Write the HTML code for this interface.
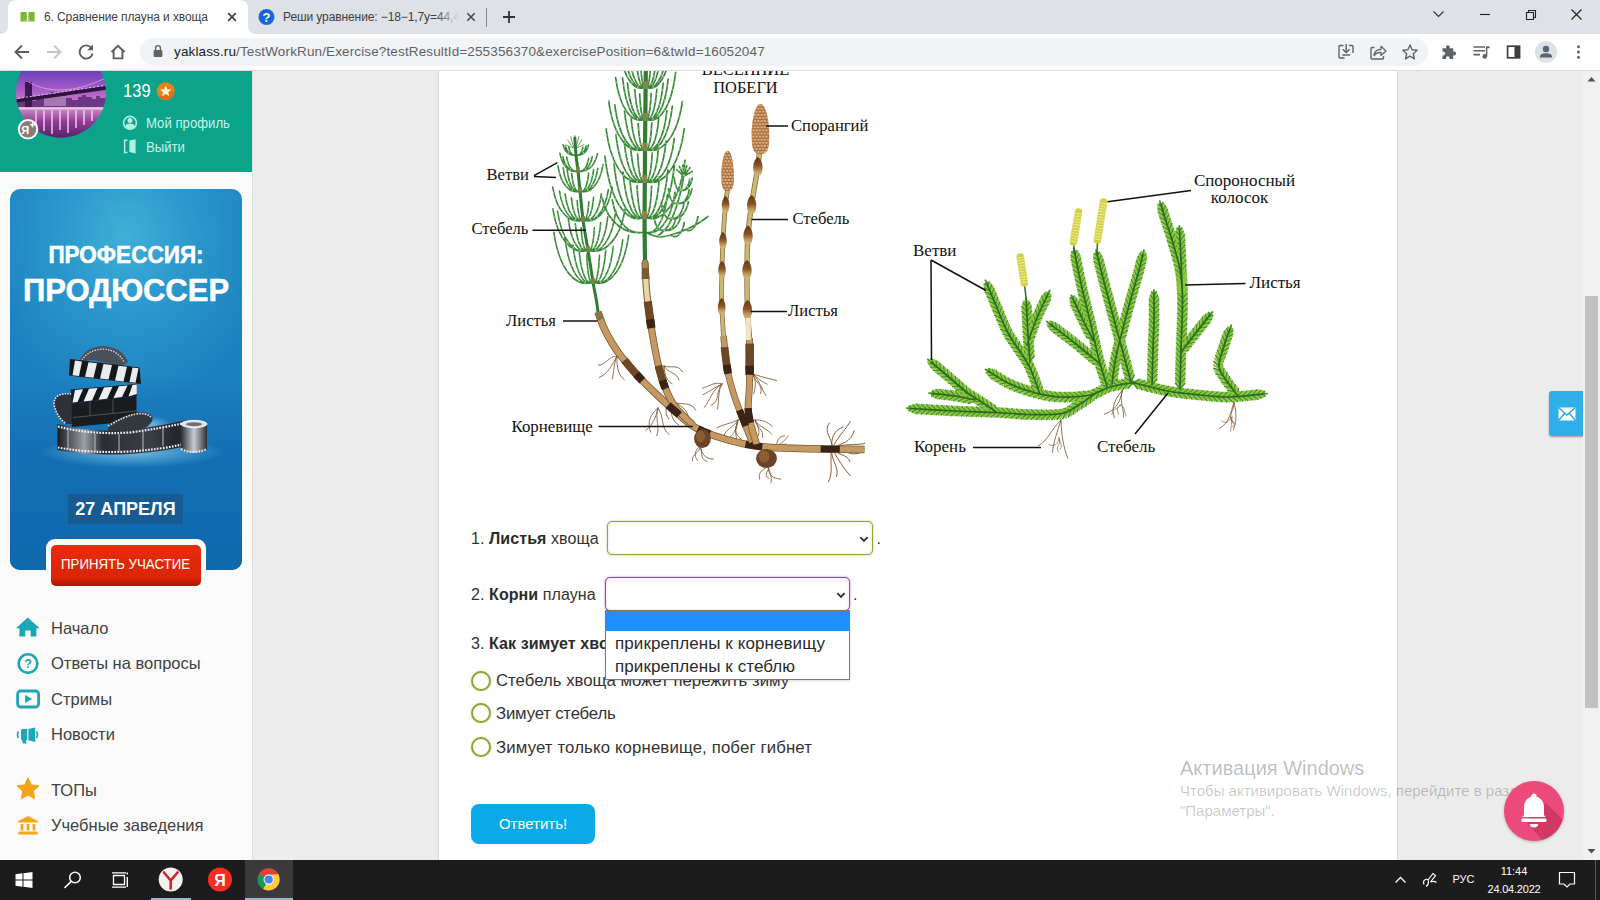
<!DOCTYPE html>
<html lang="ru">
<head>
<meta charset="utf-8">
<title>6. Сравнение плауна и хвоща</title>
<style>
*{box-sizing:border-box;margin:0;padding:0}
html,body{width:1600px;height:900px;overflow:hidden;background:#ececec;font-family:"Liberation Sans","DejaVu Sans",sans-serif;color:#333}
.abs{position:absolute}
#tabbar{position:absolute;left:0;top:0;width:1600px;height:34px;background:#dee1e6}
#tab1{position:absolute;left:8px;top:0;width:240px;height:34px;background:#fff;border-radius:8px 8px 0 0}
.tabtxt{position:absolute;top:10px;font-size:12px;color:#3c4043;white-space:nowrap;letter-spacing:-0.1px}
#toolbar{position:absolute;left:0;top:34px;width:1600px;height:37px;background:#fff;border-bottom:1px solid #dcdcdc}
#urlpill{position:absolute;left:140px;top:4px;width:1288px;height:28px;border-radius:14px;background:#f1f3f4}
#url{position:absolute;left:34px;top:6px;letter-spacing:0.13px;font-size:13.5px;color:#5f6368;white-space:nowrap}
#url b{font-weight:normal;color:#202124}
#page{position:absolute;left:0;top:71px;width:1600px;height:789px;background:#ececec;overflow:hidden}
#side{position:absolute;left:0;top:0;width:253px;height:789px;background:#fafafa;border-right:1px solid #dedede}
#ghead{position:absolute;left:0;top:0;width:252px;height:101px;background:#0ba38a}
#main{position:absolute;left:438px;top:0;width:960px;height:789px;background:#fff;border-left:1px solid #dcdcdc;border-right:1px solid #dcdcdc}
#sbar{position:absolute;left:1583px;top:0;width:17px;height:789px;background:#f1f1f1}
#thumb{position:absolute;left:2px;top:225px;width:13px;height:411.6px;background:#c1c1c1}
#task{position:absolute;left:0;top:860px;width:1600px;height:40px;background:#1c1c1c}
#banner{position:absolute;left:10px;top:118px;width:232px;height:381px;border-radius:10px;overflow:hidden;background:radial-gradient(ellipse 150px 170px at 50% 12%,#3eb0d8 0%,#2b97cc 45%,#1b80bf 100%)}
#banner:after{content:"";position:absolute;left:0;top:190px;width:232px;height:191px;background:linear-gradient(#1b80bf00 0%,#1470b4 35%,#1068ad 100%)}
.bt{-webkit-text-stroke:0.5px #fff;position:absolute;left:0;width:232px;text-align:center;color:#fff;font-weight:bold;white-space:nowrap;z-index:2;line-height:1}
#bdate{position:absolute;left:58px;top:305px;width:115px;height:30px;background:#185a92;z-index:2;text-align:center;color:#fff;font-weight:bold;font-size:18px;line-height:30px;white-space:nowrap}
#bbtn{position:absolute;left:46px;top:468px;width:160px;height:50px;background:#fafafa;border-radius:9px 9px 7px 7px;padding:5.5px 5px 0 5px}
#bbtn2{width:150px;height:41px;border-radius:5px;background:linear-gradient(#e62e0c 0%,#dc2407 80%,#b81b05 92%,#a51804 100%);color:#fff;font-size:14.5px;text-align:center;line-height:38px;white-space:nowrap}
.ptx{line-height:18px;white-space:nowrap;transform-origin:0 50%}
.sel{position:absolute;height:33.6px;border:1px solid #999;border-radius:5px;background:#fff}
.rad{position:absolute;left:31.9px;width:20px;height:20px;border:2.2px solid #8aa82f;border-radius:50%;background:#fff;box-shadow:0 0 2px rgba(138,168,47,.5)}
.q.rt{left:57px;font-size:16.8px;letter-spacing:0}
#drop{position:absolute;left:166px;top:539px;width:245px;height:70px;border:1px solid #7a7a7a;background:#fff;box-shadow:0 1px 2px rgba(0,0,0,.15)}
#dhl{position:absolute;left:0;top:0;width:243px;height:20px;background:#1e90ff}
.opt{position:absolute;left:9px;letter-spacing:0.08px;font-size:17px;color:#2a2a2a;white-space:nowrap;line-height:20px}
#btn{position:absolute;left:31.7px;top:732.7px;width:124.7px;height:40.3px;border-radius:8px;background:#0aa9ea;color:#fff;font-size:15px;text-align:center;line-height:40px}
#wm1{position:absolute;left:1180px;top:685px;font-size:20px;color:rgba(0,0,0,.27);white-space:nowrap;line-height:24px;z-index:5}
#wm2{position:absolute;left:1180px;top:709.500px;font-size:15px;color:rgba(0,0,0,.22);white-space:nowrap;line-height:20px;z-index:5}
#mail{position:absolute;left:1549px;top:320px;width:34px;height:45px;background:#2db0e8;border-radius:3px 0 0 3px;box-shadow:0 1px 2px rgba(0,0,0,.35)}
#mail svg{position:absolute;left:9px;top:16px}
#bell{z-index:6;position:absolute;left:1504px;top:710px;width:60px;height:60px;border-radius:50%;background:#ec4a7b;box-shadow:0 1px 3px rgba(0,0,0,.25)}
.tk{color:#fff;white-space:nowrap;line-height:15px}
.nav{position:absolute;left:51px;font-size:16.5px;color:#424242;white-space:nowrap}
.q{position:absolute;font-size:16px;line-height:20px;letter-spacing:0.08px;color:#333;white-space:nowrap}
.q b{font-weight:bold;color:#2b2b2b}
</style>
</head>
<body>
<!-- ======= BROWSER CHROME ======= -->
<div id="tabbar">
  <div id="tab1"></div>
  <div class="tabtxt" style="left:44px">6. Сравнение плауна и хвоща</div>
  <div class="tabtxt" style="left:283px">Реши уравнение: −18−1,7y=44,4</div>
  <div class="abs" style="left:436px;top:6px;width:26px;height:22px;background:linear-gradient(90deg,rgba(222,225,230,0),#dee1e6 90%)"></div>
</div>
<div id="toolbar">
  <div id="urlpill"><div id="url"><b>yaklass.ru</b>/TestWorkRun/Exercise?testResultId=255356370&amp;exercisePosition=6&amp;twId=16052047</div></div>
</div>


<svg class="abs" style="left:0;top:0" width="1600" height="71" viewBox="0 0 1600 71" fill="none">
  <!-- tab curve feet -->
  <path d="M0 34 Q8 34 8 26 L8 34Z" fill="#fff"/>
  <path d="M256 34 Q248 34 248 26 L248 34Z" fill="#fff"/>
  <!-- favicon 1: green book -->
  <rect x="20.5" y="12" width="6.3" height="9.5" rx="0.8" fill="#7db53c"/>
  <rect x="28.4" y="12" width="6.3" height="9.5" rx="0.8" fill="#7db53c"/>
  <path d="M20.5 21.5 L27 20.5 L27.6 22 L28.2 20.5 L34.7 21.5" stroke="#a9d36c" stroke-width="0.8"/>
  <!-- tab1 close -->
  <path d="M228.2 13.2 L235.8 20.8 M235.8 13.2 L228.2 20.8" stroke="#3c4043" stroke-width="1.7"/>
  <!-- favicon 2: blue ? -->
  <circle cx="266.5" cy="17" r="8" fill="#1a73e8"/>
  <circle cx="266.5" cy="17" r="7.2" fill="#1565d8"/>
  <text x="266.5" y="21.6" font-family="Liberation Sans, sans-serif" font-weight="bold" font-size="13" fill="#fff" text-anchor="middle">?</text>
  <!-- tab2 close -->
  <path d="M467.3 13.3 L474.7 20.7 M474.7 13.3 L467.3 20.7" stroke="#45494d" stroke-width="1.6"/>
  <!-- separator -->
  <rect x="486" y="8" width="1" height="19" fill="#868a8f"/>
  <!-- new tab plus -->
  <path d="M503 17 H515 M509 11 V23" stroke="#2f3235" stroke-width="1.8"/>
  <!-- window controls -->
  <path d="M1433.5 11.5 L1438.5 16.5 L1443.5 11.5" stroke="#333" stroke-width="1.2"/>
  <path d="M1480 14.5 H1490" stroke="#222" stroke-width="1.1"/>
  <path d="M1526.5 12.5 H1533.5 V19.5 H1526.5 Z M1528.5 12.5 V10.5 H1535.5 V17.5 H1533.5" stroke="#222" stroke-width="1.1"/>
  <path d="M1571.5 9.5 L1581.5 19.5 M1581.5 9.5 L1571.5 19.5" stroke="#222" stroke-width="1.2"/>
  <!-- back -->
  <path d="M29 52 H15.8 M22 45.5 L15.5 52 L22 58.5" stroke="#5a5d61" stroke-width="1.9"/>
  <!-- forward (disabled) -->
  <path d="M47 52 H60.2 M54 45.5 L60.5 52 L54 58.5" stroke="#c4c7ca" stroke-width="1.9"/>
  <!-- reload -->
  <path d="M91.6 48.2 A6.6 6.6 0 1 0 92.6 53.5" stroke="#5a5d61" stroke-width="1.9"/>
  <path d="M93 44.5 V50.3 H87.2 Z" fill="#5a5d61"/>
  <!-- home -->
  <path d="M111.5 52 L118 45.8 L124.5 52 M113.6 50.6 V58.4 H122.4 V50.6" stroke="#5a5d61" stroke-width="1.9" stroke-linejoin="miter"/>
  <!-- lock -->
  <rect x="153.6" y="50" width="8.8" height="7" rx="1" fill="#5f6368"/>
  <path d="M155.6 50 V48 A2.4 2.4 0 0 1 160.4 48 V50" stroke="#5f6368" stroke-width="1.4"/>
  <!-- install -->
  <path d="M1344.5 58 H1340 Q1339 58 1339 57 V46.5 Q1339 45.5 1340 45.5 H1343.5 M1349 45.5 H1352 Q1353 45.5 1353 46.5 V53" stroke="#5f6368" stroke-width="1.4"/>
  <path d="M1346.2 44 V52.2 M1342.8 49.2 L1346.2 52.6 L1349.6 49.2 M1342.3 55 H1350.2" stroke="#5f6368" stroke-width="1.4"/>
  <path d="M1346 58 H1353 M1351 56 V60" stroke="#5f6368" stroke-width="0"/>
  <!-- share -->
  <path d="M1374.5 47.5 H1372 Q1371 47.5 1371 48.5 V58 Q1371 59 1372 59 H1382.5 Q1383.5 59 1383.5 58 V56" stroke="#5f6368" stroke-width="1.4"/>
  <path d="M1374 55.5 Q1374.5 49.5 1381 49.3 V46.3 L1386 51 L1381 55.4 V52.4 Q1376.5 52.2 1374 55.5 Z" stroke="#5f6368" stroke-width="1.3" stroke-linejoin="round"/>
  <!-- star -->
  <path d="M1410 45 L1412.1 49.8 L1417.2 50.3 L1413.3 53.8 L1414.5 58.9 L1410 56.2 L1405.5 58.9 L1406.7 53.8 L1402.8 50.3 L1407.9 49.8 Z" stroke="#5f6368" stroke-width="1.4" stroke-linejoin="round"/>
  <!-- puzzle -->
  <path d="M1442.5 48.2 H1446 V47.2 A1.9 1.9 0 0 1 1449.8 47.2 V48.2 H1453.2 V51.6 H1454.2 A1.9 1.9 0 0 1 1454.2 55.4 H1453.2 V59 H1449.6 V58 A1.8 1.8 0 0 0 1446 58 V59 H1442.5 V55.4 H1443.4 A1.8 1.8 0 0 0 1443.4 51.8 H1442.5 Z" fill="#5f6368"/>
  <!-- media -->
  <path d="M1473.5 47 H1485 M1473.5 50.8 H1485 M1473.5 54.6 H1480" stroke="#5f6368" stroke-width="1.6"/>
  <path d="M1486.6 47 V56.2" stroke="#5f6368" stroke-width="1.5"/>
  <path d="M1486 46.3 H1489.6 V48.2 H1486Z" fill="#5f6368"/>
  <circle cx="1484.7" cy="56.4" r="2.3" fill="#5f6368"/>
  <!-- side panel -->
  <rect x="1507.6" y="46.2" width="12" height="11.6" stroke="#3c4043" stroke-width="1.7"/>
  <rect x="1514.5" y="46.2" width="5.1" height="11.6" fill="#3c4043"/>
  <!-- avatar -->
  <circle cx="1546" cy="52" r="11" fill="#dde1e8"/>
  <circle cx="1546" cy="49" r="3.2" fill="#5a6473"/>
  <path d="M1539.8 57.5 Q1539.8 53.3 1546 53.3 Q1552.2 53.3 1552.2 57.5 Z" fill="#5a6473"/>
  <!-- menu dots -->
  <circle cx="1578.5" cy="46.8" r="1.5" fill="#5f6368"/><circle cx="1578.5" cy="52" r="1.5" fill="#5f6368"/><circle cx="1578.5" cy="57.2" r="1.5" fill="#5f6368"/>
</svg>

<!-- ======= PAGE ======= -->
<div id="page">
  <div id="side">
    <div id="ghead">
      <svg class="abs" style="left:0;top:0" width="252" height="101" viewBox="0 71 252 101">
        <defs>
          <clipPath id="avc"><circle cx="61" cy="92.8" r="45"/></clipPath>
          <linearGradient id="sky" x1="0" y1="0" x2="0" y2="1">
            <stop offset="0.38" stop-color="#6840ba"/><stop offset="0.7" stop-color="#a75cc6"/><stop offset="1" stop-color="#d288cd"/>
          </linearGradient>
          <linearGradient id="wat" x1="0" y1="0" x2="0" y2="1">
            <stop offset="0" stop-color="#cf92cd"/><stop offset="0.45" stop-color="#923f95"/><stop offset="1" stop-color="#541f69"/>
          </linearGradient>
        </defs>
        <g clip-path="url(#avc)">
          <rect x="16" y="47" width="90" height="61" fill="url(#sky)"/>
          <rect x="16" y="107" width="90" height="32" fill="url(#wat)"/>
          <!-- skyline -->
          <path d="M16 108 V100 H22 V97 H26 V101 H36 V96 H40 V99 H46 V95 H50 V92 H54 V96 H60 V94 H66 V98 H72 V100 H78 V97 H82 V95 H86 V97 H92 V99 H96 V96 H100 V98 H106 V108Z" fill="#64307a" opacity="0.9"/>
          <path d="M44 106 V96 H52 V93 H58 V96 H66 V106Z" fill="#c9a6cf" opacity="0.6"/>
          <!-- bridge -->
          <path d="M25 82 H32 V108 H25Z" fill="#3a1b50"/>
          <path d="M14 99.5 L108 85.5 L108 89.5 L14 103Z" fill="#2e143f"/>
          <path d="M14 99 L108 85" stroke="#f0cfee" stroke-width="1" stroke-dasharray="2 2" opacity="0.9"/>
          <path d="M28.5 82 Q60 100 106 78" stroke="#e8c0e8" stroke-width="0.8" fill="none" opacity="0.8"/>
          <!-- reflections -->
          <g stroke="#f3c4ea" stroke-width="2" opacity="0.75">
            <path d="M36 110 V127"/><path d="M44 110 V131"/><path d="M52 110 V134"/><path d="M60 110 V130"/><path d="M68 110 V133"/><path d="M76 110 V128"/><path d="M84 110 V125"/><path d="M92 110 V121"/>
          </g>
          <rect x="16" y="107" width="90" height="2.5" fill="#f2d6ee" opacity="0.8"/>
        </g>
        <!-- Я+ badge -->
        <circle cx="28" cy="129.3" r="9.3" fill="#8a7c7a" stroke="#fff" stroke-width="2"/>
        <text x="25.2" y="133.6" font-family="Liberation Sans, sans-serif" font-weight="bold" font-size="11" fill="#fff" text-anchor="middle">Я</text>
        <path d="M30.2 124.8 H35 M32.6 122.4 V127.2" stroke="#fff" stroke-width="1.6"/>
        <!-- star badge -->
        <circle cx="165.7" cy="91.2" r="9" fill="#ef7f1a"/>
        <path d="M159 96.5 A9 9 0 0 0 174.6 92.4 L168.5 88 L163 95 Z" fill="#d4620f" opacity="0.6"/>
        <path d="M165.7 85.4 L167.3 89.2 L171.4 89.5 L168.3 92.2 L169.3 96.2 L165.7 94 L162.1 96.2 L163.1 92.2 L160 89.5 L164.1 89.2 Z" fill="#fff2d8"/>
        <!-- profile icon -->
        <circle cx="130" cy="122.8" r="6.4" fill="none" stroke="#b5efe2" stroke-width="1.6"/>
        <circle cx="130" cy="120.6" r="2.5" fill="#b5efe2"/>
        <path d="M125.3 127 Q125.6 123.6 130 123.6 Q134.4 123.6 134.7 127 Q132.6 129 130 129 Q127.4 129 125.3 127Z" fill="#b5efe2"/>
        <!-- exit icon -->
        <path d="M127.5 140.2 H124.6 V152.4 H127.5" fill="none" stroke="#b5efe2" stroke-width="1.5"/>
        <path d="M129.4 140.6 L135.6 139.2 V153.4 L129.4 152Z" fill="#b5efe2"/>
      </svg>
      <div class="abs ptx" style="left:123px;top:11px;font-size:18px;color:#fff;transform:scaleX(0.92)">139</div>
      <div class="abs ptx" style="left:146px;top:43px;font-size:14px;color:#c6f3e9;transform:scaleX(0.94)" id="prof">Мой профиль</div>
      <div class="abs ptx" style="left:146px;top:67px;font-size:14px;color:#c6f3e9;transform:scaleX(0.94)">Выйти</div>
    </div>
    <!-- banner -->
    <div id="banner">
      <svg class="abs" style="left:0;top:0;z-index:1" width="232" height="381" viewBox="10 189 232 381">
        <defs>
          <linearGradient id="fg1" x1="0" y1="0" x2="1" y2="0"><stop offset="0" stop-color="#1a1c20"/><stop offset="0.18" stop-color="#9aa0a8"/><stop offset="0.3" stop-color="#2a2d33"/><stop offset="0.62" stop-color="#3a3e46"/><stop offset="0.8" stop-color="#23262b"/><stop offset="1" stop-color="#4a4f58"/></linearGradient>
          <linearGradient id="fg2" x1="0" y1="0" x2="1" y2="0"><stop offset="0" stop-color="#2b2e34"/><stop offset="0.5" stop-color="#c9cdd2"/><stop offset="1" stop-color="#2b2e34"/></linearGradient>
          <radialGradient id="glow" cx="0.5" cy="0.5" r="0.5"><stop offset="0" stop-color="#8fd4f0" stop-opacity="0.75"/><stop offset="1" stop-color="#8fd4f0" stop-opacity="0"/></radialGradient>
        </defs>
        <ellipse cx="132" cy="452" rx="92" ry="16" fill="url(#glow)"/>
        <ellipse cx="150" cy="424" rx="22" ry="8" fill="url(#glow)"/>
        <!-- top reel -->
        <path d="M79 362 Q84 347 103 346 Q122 347 128 362 L122 366 L92 360 Z" fill="#4b5058"/>
        <path d="M82 360 Q88 350 103 349 Q118 350 124 362" stroke="#d9dde2" stroke-width="1.2" stroke-dasharray="1.5 1.2" fill="none"/>
        <!-- left loop -->
        <path d="M72 394 Q54 392 54 404 Q56 416 66 424 L72 424 Z" fill="#2f3339"/>
        <path d="M72 394 Q54 392 54 404 Q56 416 66 424" stroke="#dfe3e8" stroke-width="1.6" stroke-dasharray="1.6 1.2" fill="none"/>
        <!-- upper stick -->
        <path d="M70 359 L139.5 367.5 L141 384 L69 375.5 Z" fill="#16171a"/>
        <g fill="#e9ecef">
          <path d="M75 360.5 L82 361.4 L79 376 L72.5 375.2Z"/><path d="M88.5 362.2 L97 363.2 L93.5 377.8 L85 376.8Z"/><path d="M103.5 364 L112 365 L108.5 379.6 L100 378.6Z"/><path d="M118.5 365.8 L127 366.8 L123.5 381.4 L115 380.4Z"/><path d="M132.5 367.5 L138.5 368.2 L135.5 382.8 L129.5 382.1Z"/>
        </g>
        <!-- lower stick -->
        <path d="M70.8 389.5 L136.8 384 L136.8 396 L71.8 403.5 Z" fill="#16171a"/>
        <g fill="#eef0f3">
          <path d="M75 390 L83 389.3 L77.5 402 L72.5 402.6Z"/><path d="M89 388.8 L97.5 388 L92 400.5 L83.5 401.4Z"/><path d="M104 387.4 L112.5 386.7 L107 398.8 L98.5 399.7Z"/><path d="M119 386.2 L127.5 385.5 L122 397.1 L113.5 398Z"/><path d="M132.5 385 L136.8 384.6 L136.8 394 L128.5 396.4Z"/>
        </g>
        <!-- board body -->
        <path d="M71.8 403.5 L136.5 396 L136.5 421 L71.8 427 Z" fill="#1b1c1f"/>
        <path d="M73 417.5 L136 411" stroke="#5b5f66" stroke-width="0.8"/>
        <path d="M90 402 V415.5 M113 399.5 V413" stroke="#5b5f66" stroke-width="0.8"/>
        <!-- film strip (back curl) -->
        <path d="M108 425 Q140 405 152 416 Q155 424 140 430 L108 432Z" fill="#33373e"/>
        <path d="M108 426 Q140 407 151 417" stroke="#e3e6ea" stroke-width="1.6" stroke-dasharray="1.6 1.2" fill="none"/>
        <!-- film strip front -->
        <path d="M57.5 424 Q90 433 130 430 Q160 426 182 421 Q196 418 207 424 L207 450 Q196 445 182 447 Q160 452 130 454 Q90 456 57.5 450 Z" fill="url(#fg1)"/>
        <path d="M58 426.5 Q90 435 130 432.5 Q160 428.5 182 423.5 Q196 420.5 206.5 426" stroke="#eef1f4" stroke-width="2.2" stroke-dasharray="1.7 1.3" fill="none"/>
        <path d="M58 447.5 Q90 453.5 130 451.5 Q160 449.5 182 444.5 Q196 442.5 206.5 447.5" stroke="#eef1f4" stroke-width="2.2" stroke-dasharray="1.7 1.3" fill="none"/>
        <g stroke="#c9cdd2" stroke-width="0.9"><path d="M68 430 V449"/><path d="M95 434 V452"/><path d="M119 434 V452"/><path d="M143 432 V450"/><path d="M163 428 V446"/></g>
        <!-- roll on right -->
        <path d="M181 424 Q193 417 207 424 L207 450 Q193 456 181 450 Z" fill="url(#fg2)"/>
        <ellipse cx="194" cy="424" rx="13" ry="3.6" fill="#dfe3e7" stroke="#f3f5f7" stroke-width="1"/>
        <ellipse cx="194" cy="424.2" rx="8" ry="2" fill="#6a7079"/>
        <path d="M181 449 Q193 455 207 449" stroke="#eef1f4" stroke-width="2" stroke-dasharray="1.7 1.3" fill="none"/>
      </svg>
      <div class="bt" id="bt1" style="top:55px;font-size:23px;transform:scaleX(0.98)">ПРОФЕССИЯ:</div>
      <div class="bt" id="bt2" style="top:86px;font-size:31.5px;transform:scaleX(0.985)">ПРОДЮССЕР</div>
      <div id="bdate"><span>27 АПРЕЛЯ</span></div>
    </div>
    <div id="bbtn"><div id="bbtn2"><span style="display:inline-block;transform:scaleX(0.915)">ПРИНЯТЬ УЧАСТИЕ</span></div></div>
    <!-- nav -->
    <svg class="abs" style="left:0;top:529px" width="60" height="260" viewBox="0 600 60 260" fill="none">
      <!-- home -->
      <path d="M27.8 617.6 L39.6 628.2 H36.4 V636.4 H30.6 V630.4 H25.2 V636.4 H19.4 V628.2 H16 Z" fill="#1ba7b8"/>
      <!-- question -->
      <circle cx="28" cy="663.6" r="9.3" stroke="#1ba7b8" stroke-width="2.6"/>
      <text x="28" y="668.2" font-family="Liberation Sans, sans-serif" font-weight="bold" font-size="12.5" fill="#1ba7b8" text-anchor="middle">?</text>
      <!-- streams -->
      <rect x="17.6" y="691" width="21" height="16" rx="3" stroke="#1ba7b8" stroke-width="2.8"/>
      <path d="M25.2 695 L32.2 699 L25.2 703 Z" fill="#1ba7b8"/>
      <!-- news (megaphone) -->
      <path d="M21 730.5 Q21 729 22.5 729 H27.2 V740.2 H25.8 L26.6 743.4 H23 L22 740.2 Q21 740 21 738.5 Z" fill="#1ba7b8"/>
      <path d="M28.4 729 L35.2 727.4 V742 L28.4 740.2 Z" fill="#1ba7b8"/>
      <path d="M36.4 731.5 Q38.6 734.7 36.4 738" stroke="#1ba7b8" stroke-width="1.6"/>
      <path d="M18.4 731.5 Q16.6 734.7 18.4 738" stroke="#1ba7b8" stroke-width="1.6"/>
      <!-- star -->
      <path d="M28 777.8 L31.3 784.9 L39 785.8 L33.3 791.1 L34.8 798.8 L28 795 L21.2 798.8 L22.7 791.1 L17 785.8 L24.7 784.9 Z" fill="#f5a314" stroke="#f5a314" stroke-width="1" stroke-linejoin="round"/>
      <!-- institution -->
      <path d="M28 816 L37.8 821 V822.6 H18.2 V821 Z" fill="#f3a81c"/>
      <path d="M20.6 824 H23.4 V830.6 H20.6Z M26.6 824 H29.4 V830.6 H26.6Z M32.6 824 H35.4 V830.6 H32.6Z" fill="#f3a81c"/>
      <path d="M19.2 831.4 H36.8 V832.6 H37.8 V834.4 H18.2 V832.6 H19.2Z" fill="#f3a81c"/>
    </svg>
        <div class="nav" style="top:548px">Начало</div>
    <div class="nav" style="top:583px">Ответы на вопросы</div>
    <div class="nav" style="top:619px">Стримы</div>
    <div class="nav" style="top:654px">Новости</div>
    <div class="nav" style="top:710px">ТОПы</div>
    <div class="nav" style="top:745px">Учебные заведения</div>
  </div>
  <div id="main">
<!--FIG-START--><svg class="abs" style="left:-1px;top:0" width="960" height="789" viewBox="438 71 960 789">
<g>
<path d="M574.8 148Q570 147.5 565.6 144.6M574.8 148Q571 146.7 567.5 139.6M574.8 148Q572.7 146.2 570.8 136.2M574.8 148Q574.8 146 574.8 135M574.8 148Q576.9 146.2 578.8 136.2M574.8 148Q578.6 146.7 582.1 139.6M574.8 148Q579.6 147.5 584 144.6" stroke="#5c9e57" stroke-width="0.9" fill="none"/>
<path d="M576 155C570.6 156.3 564.9 152.8 563.1 144.9M576 155C571.5 156.2 566.8 153 565.3 146M576 155C572.9 156 569.7 153.3 568.7 147.1M576 155C581.3 156.3 586.8 152.8 588.5 145M576 155C580.3 156.2 584.9 153 586.3 145.7M576 155C578.9 156 582 153.3 582.9 147.4M578 171C570.4 173.3 562.5 167.1 559.9 153.4M578 171C571.6 172.9 565 167.8 562.8 156.5M578 171C573.3 172.8 568.3 167.9 566.7 157M578 171C586.1 173.2 594.6 167.2 597.4 153.8M578 171C584 172.9 590.2 167.8 592.2 156.6M578 171C582.5 172.6 587.2 168.2 588.7 158.4M580 191C570.7 194.3 561 185.5 557.9 165.8M580 191C572.9 194 565.4 185.9 563.1 167.7M580 191C574.6 193.7 569 186.4 567.2 169.9M580 191C576.5 193.3 572.9 187.2 571.7 173.6M580 191C589.7 194.4 599.8 185.2 603 164.5M580 191C587.5 194 595.3 186 597.8 168.2M580 191C585.7 193.8 591.7 186.3 593.6 169.5M580 191C583.6 193.3 587.4 187.1 588.6 173.4M583 220C570.3 224.3 557 212.8 552.7 187.1M583 220C573.1 223.8 562.8 213.6 559.5 191M583 220C575.5 223.4 567.6 214.2 565.1 193.8M583 220C578.2 222.9 573 215.1 571.4 197.9M583 220C580.6 222.5 578 215.7 577.2 200.5M583 220C595.3 224.3 608.1 212.8 612.2 187.2M583 220C593.7 224 604.9 213.3 608.4 189.5M583 220C590.7 223.4 598.8 214.2 601.4 193.8M583 220C587.5 223 592.1 215 593.6 197.2M583 220C585.5 222.4 588 216 588.8 201.8M588 250C573.2 255.4 557.8 240.9 552.8 208.8M588 250C575.2 255.1 561.8 241.4 557.5 211M588 250C579.7 254.1 571 243 568.2 218.2M588 250C582.7 253.4 577.1 244.2 575.3 223.7M588 250C585.1 252.9 582.1 245.1 581.1 227.8M588 250C603.7 255.4 620 240.8 625.3 208.3M588 250C599.7 255.1 611.9 241.5 615.8 211.1M588 250C596.3 254.3 605 242.7 607.8 216.7M588 250C593.3 253.6 598.9 244 600.7 222.5M588 250C590.7 252.9 593.5 245.1 594.4 227.5M593 282C576.6 288.5 559.4 271.1 553.9 232.3M593 282C581.2 287.9 568.8 272.1 564.8 236.8M593 282C584.6 286.8 575.8 273.9 573 245M593 282C587.2 286.2 581.1 274.9 579.1 249.8M593 282C590.3 285.6 587.5 275.9 586.7 254M593 282C608 288.1 623.7 271.7 628.7 235.4M593 282C605.5 287.5 618.6 272.7 622.8 239.7M593 282C601.5 286.6 610.4 274.2 613.2 246.5M593 282C598.3 286.2 603.9 275 605.7 250M593 282C595.7 285.5 598.6 276.1 599.5 255.3" stroke="#3a8a3c" stroke-width="1.6" fill="none" stroke-linecap="round"/>
<path d="M576 155C570.6 156.3 564.9 152.8 563.1 144.9M576 155C571.5 156.2 566.8 153 565.3 146M576 155C572.9 156 569.7 153.3 568.7 147.1M576 155C581.3 156.3 586.8 152.8 588.5 145M576 155C580.3 156.2 584.9 153 586.3 145.7M576 155C578.9 156 582 153.3 582.9 147.4M578 171C570.4 173.3 562.5 167.1 559.9 153.4M578 171C571.6 172.9 565 167.8 562.8 156.5M578 171C573.3 172.8 568.3 167.9 566.7 157M578 171C586.1 173.2 594.6 167.2 597.4 153.8M578 171C584 172.9 590.2 167.8 592.2 156.6M578 171C582.5 172.6 587.2 168.2 588.7 158.4M580 191C570.7 194.3 561 185.5 557.9 165.8M580 191C572.9 194 565.4 185.9 563.1 167.7M580 191C574.6 193.7 569 186.4 567.2 169.9M580 191C576.5 193.3 572.9 187.2 571.7 173.6M580 191C589.7 194.4 599.8 185.2 603 164.5M580 191C587.5 194 595.3 186 597.8 168.2M580 191C585.7 193.8 591.7 186.3 593.6 169.5M580 191C583.6 193.3 587.4 187.1 588.6 173.4M583 220C570.3 224.3 557 212.8 552.7 187.1M583 220C573.1 223.8 562.8 213.6 559.5 191M583 220C575.5 223.4 567.6 214.2 565.1 193.8M583 220C578.2 222.9 573 215.1 571.4 197.9M583 220C580.6 222.5 578 215.7 577.2 200.5M583 220C595.3 224.3 608.1 212.8 612.2 187.2M583 220C593.7 224 604.9 213.3 608.4 189.5M583 220C590.7 223.4 598.8 214.2 601.4 193.8M583 220C587.5 223 592.1 215 593.6 197.2M583 220C585.5 222.4 588 216 588.8 201.8M588 250C573.2 255.4 557.8 240.9 552.8 208.8M588 250C575.2 255.1 561.8 241.4 557.5 211M588 250C579.7 254.1 571 243 568.2 218.2M588 250C582.7 253.4 577.1 244.2 575.3 223.7M588 250C585.1 252.9 582.1 245.1 581.1 227.8M588 250C603.7 255.4 620 240.8 625.3 208.3M588 250C599.7 255.1 611.9 241.5 615.8 211.1M588 250C596.3 254.3 605 242.7 607.8 216.7M588 250C593.3 253.6 598.9 244 600.7 222.5M588 250C590.7 252.9 593.5 245.1 594.4 227.5M593 282C576.6 288.5 559.4 271.1 553.9 232.3M593 282C581.2 287.9 568.8 272.1 564.8 236.8M593 282C584.6 286.8 575.8 273.9 573 245M593 282C587.2 286.2 581.1 274.9 579.1 249.8M593 282C590.3 285.6 587.5 275.9 586.7 254M593 282C608 288.1 623.7 271.7 628.7 235.4M593 282C605.5 287.5 618.6 272.7 622.8 239.7M593 282C601.5 286.6 610.4 274.2 613.2 246.5M593 282C598.3 286.2 603.9 275 605.7 250M593 282C595.7 285.5 598.6 276.1 599.5 255.3" stroke="#a6d38c" stroke-width="1.3" fill="none" stroke-dasharray="1.2 6.3" opacity="0.85"/>
<path d="M574.8 138C575 140.8 575.5 149.5 576 155C576.5 160.5 577.3 165 578 171C578.7 177 579.1 182.5 580 191C580.9 199.5 582 212.2 583.3 222C584.6 231.8 586.4 240 588 250C589.6 260 591.6 273.5 593 282C594.4 290.5 595.7 296 596.5 301C597.3 306 597.8 310.2 598 312" stroke="#2f7d33" stroke-width="3" fill="none" stroke-linecap="round"/>
<path d="M646.3 40C638 44.4 629.4 32.6 626.6 6.2M646.3 40C639.4 44 632.2 33.3 629.9 9.5M646.3 40C641.6 43.6 636.6 33.9 635 12.3M646.3 40C643.4 42.8 640.4 35.3 639.4 18.5M646.3 40C655.1 44.6 664.4 32.2 667.3 4.7M646.3 40C652.7 43.8 659.3 33.5 661.4 10.5M646.3 40C651.2 43.6 656.2 33.9 657.8 12.1M646.3 40C649.2 43.1 652.3 34.8 653.3 16.3M645.9 64C635.8 69 625.2 55.5 621.8 25.5M645.9 64C638.4 68.2 630.6 56.8 628.1 31.4M645.9 64C640.8 68.1 635.4 57.1 633.7 32.7M645.9 64C642.5 67.3 639 58.3 637.9 38.3M645.9 64C655.3 69.1 665.1 55.3 668.2 24.5M645.9 64C653.5 68.3 661.5 56.7 664 30.6M645.9 64C651.1 68 656.5 57.3 658.3 33.6M645.9 64C649.2 67.2 652.7 58.7 653.8 39.7M645.6 87C634.2 92.7 622.2 77.4 618.4 43.2M645.6 87C636.6 91.8 627.3 78.9 624.3 50.2M645.6 87C638.9 91.1 632 80 629.7 55.4M645.6 87C641.8 90.5 637.7 81.1 636.5 60M645.6 87C643.6 89.8 641.5 82.2 640.8 65.1M645.6 87C656.5 92.4 667.9 77.9 671.6 45.7M645.6 87C654.5 91.7 663.9 79.1 666.9 50.9M645.6 87C651.9 91.5 658.4 79.5 660.5 52.7M645.6 87C649.9 90.7 654.5 80.8 655.9 58.8M645.6 87C647.7 90 649.9 81.9 650.6 63.7M645.3 119C632.8 124.4 619.8 109.9 615.6 77.5M645.3 119C635.7 124.4 625.7 109.9 622.5 77.5M645.3 119C637.8 123.7 630 111 627.5 82.8M645.3 119C640.9 122.8 636.3 112.5 634.8 89.5M645.3 119C643 122.2 640.5 113.5 639.7 94.1M645.3 119C658 125.1 671.4 108.7 675.6 72.4M645.3 119C654.9 124.2 665 110.2 668.2 79.2M645.3 119C652.8 123.7 660.7 111.1 663.2 83M645.3 119C650.1 122.9 655.2 112.5 656.8 89.3M645.3 119C647.7 122.3 650.3 113.4 651.1 93.6M645 149C629.7 155.2 613.7 138.4 608.7 101M645 149C632.3 154.7 619 139.3 614.8 104.8M645 149C636.4 153.9 627.4 140.7 624.5 111.1M645 149C639.2 153.1 633 142.1 631.1 117.7M645 149C642.2 152.3 639.2 143.4 638.2 123.5M645 149C660.7 155.2 677.1 138.5 682.4 101.4M645 149C656.5 154.6 668.6 139.5 672.4 106M645 149C654.2 154 663.9 140.6 666.9 110.7M645 149C650.7 153 656.8 142.3 658.7 118.4M645 149C647.9 152.4 650.9 143.3 651.8 122.9M644.8 181C628.5 187.8 611.5 169.6 606.1 129M644.8 181C632.7 187 619.9 170.8 615.9 134.6M644.8 181C636.1 186.1 627.1 172.3 624.2 141.5M644.8 181C638.9 185.2 632.8 174 630.8 149.1M644.8 181C641.8 184.6 638.6 175 637.6 153.5M644.8 181C661.4 187.8 678.8 169.4 684.3 128.5M644.8 181C657.2 186.5 670.2 171.7 674.3 138.6M644.8 181C653.8 186.2 663.1 172.2 666.1 141.2M644.8 181C650.5 185.1 656.4 174 658.3 149.3M644.8 181C647.9 184.6 651.1 174.8 652.2 153M644.6 217C627.9 224.9 610.4 203.6 604.9 156.3M644.6 217C631.8 223.9 618.3 205.3 614 163.8M644.6 217C635.5 222.8 626 207.1 623 172.1M644.6 217C638.3 222.2 631.8 208.2 629.7 176.8M644.6 217C641.4 221.1 638.1 210.1 637.1 185.5M644.6 217C661.6 224.4 679.3 204.5 685 160.3M644.6 217C657.1 223.8 670.3 205.5 674.4 164.8M644.6 217C654.4 223.1 664.6 206.6 667.9 169.9M644.6 217C650.8 222.2 657.3 208.1 659.4 176.7M644.6 217C647.5 221 650.6 210.3 651.6 186.4M644.6 232C626.6 235.5 607.8 224.3 601.9 197M644.6 232C631 235.2 616.7 224.9 612.2 199.9M644.6 232C657.4 236 670.8 223.2 675.1 192M644.6 232C654.2 235.7 664.3 223.8 667.5 194.5M644.6 232C647.2 232.8 654.1 237 660 237C665.9 237 673.8 234.2 680 232C686.2 229.8 692.3 226.6 697 224C701.7 221.4 706.2 217.8 708 216.5M658 236C659.7 234.3 665 230.7 668 226C671 221.3 673.7 214.7 676 208C678.3 201.3 680.7 192 682 186C683.3 180 683.7 174.3 684 172M664 230C671.1 232.1 678.6 226.9 680.9 216.1M664 230C669 231.8 674.2 227.4 675.8 218.1M664 230C659.8 232 655.4 227.1 654 216.8M671 218C678.3 220.4 686 214.5 688.4 201.9M671 218C676.4 220.2 682.1 214.7 684 203.1M671 218C667 220.3 662.7 214.6 661.4 202.7M677 203C683.3 205.1 689.8 199.9 691.9 188.9M677 203C682.1 205 687.5 200.1 689.2 189.9M677 203C673.4 205.1 669.6 199.9 668.4 188.8M681 190C685.7 191.8 690.6 187.4 692.2 178.1M681 190C684.7 191.7 688.5 187.6 689.7 179M681 190C678.1 191.9 675.1 187.2 674.2 177.3M672 236C677.2 238.7 682.5 233 684.3 222.5M686 230C691 232.7 696.3 227 698 216.5M684 176L676.6 169.7M684 176L679.4 166.6M684 176L682.9 165.1M684 176L686.6 165.5M684 176L689.9 167.7M684 176L692.2 171.4" stroke="#3a8a3c" stroke-width="1.7" fill="none" stroke-linecap="round"/>
<path d="M646.3 40C638 44.4 629.4 32.6 626.6 6.2M646.3 40C639.4 44 632.2 33.3 629.9 9.5M646.3 40C641.6 43.6 636.6 33.9 635 12.3M646.3 40C643.4 42.8 640.4 35.3 639.4 18.5M646.3 40C655.1 44.6 664.4 32.2 667.3 4.7M646.3 40C652.7 43.8 659.3 33.5 661.4 10.5M646.3 40C651.2 43.6 656.2 33.9 657.8 12.1M646.3 40C649.2 43.1 652.3 34.8 653.3 16.3M645.9 64C635.8 69 625.2 55.5 621.8 25.5M645.9 64C638.4 68.2 630.6 56.8 628.1 31.4M645.9 64C640.8 68.1 635.4 57.1 633.7 32.7M645.9 64C642.5 67.3 639 58.3 637.9 38.3M645.9 64C655.3 69.1 665.1 55.3 668.2 24.5M645.9 64C653.5 68.3 661.5 56.7 664 30.6M645.9 64C651.1 68 656.5 57.3 658.3 33.6M645.9 64C649.2 67.2 652.7 58.7 653.8 39.7M645.6 87C634.2 92.7 622.2 77.4 618.4 43.2M645.6 87C636.6 91.8 627.3 78.9 624.3 50.2M645.6 87C638.9 91.1 632 80 629.7 55.4M645.6 87C641.8 90.5 637.7 81.1 636.5 60M645.6 87C643.6 89.8 641.5 82.2 640.8 65.1M645.6 87C656.5 92.4 667.9 77.9 671.6 45.7M645.6 87C654.5 91.7 663.9 79.1 666.9 50.9M645.6 87C651.9 91.5 658.4 79.5 660.5 52.7M645.6 87C649.9 90.7 654.5 80.8 655.9 58.8M645.6 87C647.7 90 649.9 81.9 650.6 63.7M645.3 119C632.8 124.4 619.8 109.9 615.6 77.5M645.3 119C635.7 124.4 625.7 109.9 622.5 77.5M645.3 119C637.8 123.7 630 111 627.5 82.8M645.3 119C640.9 122.8 636.3 112.5 634.8 89.5M645.3 119C643 122.2 640.5 113.5 639.7 94.1M645.3 119C658 125.1 671.4 108.7 675.6 72.4M645.3 119C654.9 124.2 665 110.2 668.2 79.2M645.3 119C652.8 123.7 660.7 111.1 663.2 83M645.3 119C650.1 122.9 655.2 112.5 656.8 89.3M645.3 119C647.7 122.3 650.3 113.4 651.1 93.6M645 149C629.7 155.2 613.7 138.4 608.7 101M645 149C632.3 154.7 619 139.3 614.8 104.8M645 149C636.4 153.9 627.4 140.7 624.5 111.1M645 149C639.2 153.1 633 142.1 631.1 117.7M645 149C642.2 152.3 639.2 143.4 638.2 123.5M645 149C660.7 155.2 677.1 138.5 682.4 101.4M645 149C656.5 154.6 668.6 139.5 672.4 106M645 149C654.2 154 663.9 140.6 666.9 110.7M645 149C650.7 153 656.8 142.3 658.7 118.4M645 149C647.9 152.4 650.9 143.3 651.8 122.9M644.8 181C628.5 187.8 611.5 169.6 606.1 129M644.8 181C632.7 187 619.9 170.8 615.9 134.6M644.8 181C636.1 186.1 627.1 172.3 624.2 141.5M644.8 181C638.9 185.2 632.8 174 630.8 149.1M644.8 181C641.8 184.6 638.6 175 637.6 153.5M644.8 181C661.4 187.8 678.8 169.4 684.3 128.5M644.8 181C657.2 186.5 670.2 171.7 674.3 138.6M644.8 181C653.8 186.2 663.1 172.2 666.1 141.2M644.8 181C650.5 185.1 656.4 174 658.3 149.3M644.8 181C647.9 184.6 651.1 174.8 652.2 153M644.6 217C627.9 224.9 610.4 203.6 604.9 156.3M644.6 217C631.8 223.9 618.3 205.3 614 163.8M644.6 217C635.5 222.8 626 207.1 623 172.1M644.6 217C638.3 222.2 631.8 208.2 629.7 176.8M644.6 217C641.4 221.1 638.1 210.1 637.1 185.5M644.6 217C661.6 224.4 679.3 204.5 685 160.3M644.6 217C657.1 223.8 670.3 205.5 674.4 164.8M644.6 217C654.4 223.1 664.6 206.6 667.9 169.9M644.6 217C650.8 222.2 657.3 208.1 659.4 176.7M644.6 217C647.5 221 650.6 210.3 651.6 186.4M644.6 232C626.6 235.5 607.8 224.3 601.9 197M644.6 232C631 235.2 616.7 224.9 612.2 199.9M644.6 232C657.4 236 670.8 223.2 675.1 192M644.6 232C654.2 235.7 664.3 223.8 667.5 194.5M644.6 232C647.2 232.8 654.1 237 660 237C665.9 237 673.8 234.2 680 232C686.2 229.8 692.3 226.6 697 224C701.7 221.4 706.2 217.8 708 216.5M658 236C659.7 234.3 665 230.7 668 226C671 221.3 673.7 214.7 676 208C678.3 201.3 680.7 192 682 186C683.3 180 683.7 174.3 684 172M664 230C671.1 232.1 678.6 226.9 680.9 216.1M664 230C669 231.8 674.2 227.4 675.8 218.1M664 230C659.8 232 655.4 227.1 654 216.8M671 218C678.3 220.4 686 214.5 688.4 201.9M671 218C676.4 220.2 682.1 214.7 684 203.1M671 218C667 220.3 662.7 214.6 661.4 202.7M677 203C683.3 205.1 689.8 199.9 691.9 188.9M677 203C682.1 205 687.5 200.1 689.2 189.9M677 203C673.4 205.1 669.6 199.9 668.4 188.8M681 190C685.7 191.8 690.6 187.4 692.2 178.1M681 190C684.7 191.7 688.5 187.6 689.7 179M681 190C678.1 191.9 675.1 187.2 674.2 177.3M672 236C677.2 238.7 682.5 233 684.3 222.5M686 230C691 232.7 696.3 227 698 216.5M684 176L676.6 169.7M684 176L679.4 166.6M684 176L682.9 165.1M684 176L686.6 165.5M684 176L689.9 167.7M684 176L692.2 171.4" stroke="#a6d38c" stroke-width="1.4" fill="none" stroke-dasharray="1.2 6.3" opacity="0.85"/>
<path d="M646.5 30C646.4 36.8 646 56.2 645.8 71C645.6 85.8 645.4 106 645.3 119C645.2 132 645.1 138.7 645 149C644.9 159.3 644.9 169.7 644.8 181C644.7 192.3 644.6 208.5 644.6 217C644.6 225.5 644.5 224.5 644.6 232C644.7 239.5 644.9 257 645 262" stroke="#2f7d33" stroke-width="4.2" fill="none"/>
<path d="M643 81L648.2 81L647.9 89L643.3 89Z" fill="#8b8450"/>
<path d="M642.7 113L647.9 113L647.6 121L643 121Z" fill="#8b8450"/>
<path d="M642.4 143L647.6 143L647.3 151L642.7 151Z" fill="#8b8450"/>
<path d="M642.2 175L647.4 175L647.1 183L642.5 183Z" fill="#8b8450"/>
<path d="M642 211L647.2 211L646.9 219L642.3 219Z" fill="#8b8450"/>
<path d="M576.1 167L579.9 167L579.7 173L576.3 173Z" fill="#7d8048"/>
<path d="M578.1 187L581.9 187L581.7 193L578.3 193Z" fill="#7d8048"/>
<path d="M581.1 216L584.9 216L584.7 222L581.3 222Z" fill="#7d8048"/>
<path d="M586.1 246L589.9 246L589.7 252L586.3 252Z" fill="#7d8048"/>
<path d="M591.1 278L594.9 278L594.7 284L591.3 284Z" fill="#7d8048"/>
</g>
<path d="M617 356C616.8 365 617 373.8 624.3 379.9M617 356C613.5 363.7 614.1 372.2 612.3 379M617 356C612.1 364.6 608.3 373.9 599 377.6M617 356C608.6 355.8 605.8 365.5 598.5 365.1" stroke="#7a4e2a" stroke-width="0.8" fill="none" stroke-linecap="round"/>
<path d="M664 366C670.4 368.5 678.3 363.7 682.6 372.1M664 366C667.3 373.4 677.4 372 679 380M664 366C664.8 372.9 665.2 380 672.1 383.8M664 366C662.6 373.9 666.7 381.8 662.8 388.6" stroke="#7a4e2a" stroke-width="0.8" fill="none" stroke-linecap="round"/>
<path d="M670 400C678.1 407.2 690.1 399.5 695.9 410M670 400C678.3 404.5 687.4 407.9 688.9 418.6M670 400C677.1 405 676.2 414 680.1 419.4M670 400C672.2 408.9 668.7 419.1 678.7 424.8M670 400C665.9 406 663.9 412.3 668.7 418.9" stroke="#7a4e2a" stroke-width="0.8" fill="none" stroke-linecap="round"/>
<path d="M658 408C664.5 416.3 660.3 428.2 669 434.3M658 408C654.6 417.7 660.3 427.4 656.8 435.7M658 408C650.5 414.4 646.6 422.3 650.6 432.1M658 408C656 417 652.8 425.3 645.8 430.4" stroke="#7a4e2a" stroke-width="0.8" fill="none" stroke-linecap="round"/>
<path d="M722 384C717.1 392.2 719.7 401.7 717.3 409M722 384C715.7 390.5 720.4 401.3 711.1 405.4M722 384C712.1 389.4 710 400.5 704.4 407.2M722 384C715.2 387.5 708.7 391.6 703 394.8M722 384C714.2 380.9 708.4 387.1 702.5 388.1" stroke="#7a4e2a" stroke-width="0.8" fill="none" stroke-linecap="round"/>
<path d="M753 374C761.1 376.9 769.5 378.7 776.6 380.5M753 374C757.6 378 762 382.3 767.1 384.2M753 374C759.6 380.6 761.9 389.6 766.2 396M753 374C753.6 382 764.1 384.8 760.6 393.7M753 374C756.6 380.7 755.5 387.7 753.8 393.8" stroke="#7a4e2a" stroke-width="0.8" fill="none" stroke-linecap="round"/>
<path d="M738 420C735.5 427 732.9 433.9 741.7 439.4M738 420C735.5 427 734.6 434.2 737.3 440.6M738 420C737.5 429.5 732.4 436.5 725.3 441.1M738 420C734.1 427.7 724 429.3 723 438.2M738 420C730.9 423.8 722.6 424.2 716.7 427.9" stroke="#7a4e2a" stroke-width="0.8" fill="none" stroke-linecap="round"/>
<path d="M755 420C762 419.1 767.7 422.4 772.2 426.3M755 420C758.8 427.5 767.8 428.5 771.7 434.2M755 420C756.1 427 764.6 429.9 762.4 437.6M755 420C757.9 426.6 762.1 433 755.5 440" stroke="#7a4e2a" stroke-width="0.8" fill="none" stroke-linecap="round"/>
<path d="M700 446C701.1 453.5 704.9 458.9 713.5 459.1M700 446C703.9 451 698.6 458.7 706.9 461.5M700 446C695.7 450.1 692.7 454.6 697.8 460.8M700 446C700.9 453.5 690.7 453.8 692.6 460.9" stroke="#7a4e2a" stroke-width="0.8" fill="none" stroke-linecap="round"/>
<path d="M768 466C768.1 473.9 771.9 478.9 780.7 479.1M768 466C769.3 471.8 772.9 477.1 770.8 482.9M768 466C771.3 470.8 761.3 473.8 769 478.6M768 466C763.9 469.6 757.7 471.4 759.5 479" stroke="#7a4e2a" stroke-width="0.8" fill="none" stroke-linecap="round"/>
<path d="M832 448C833.4 438.7 822.4 432.2 829.3 423M832 448C831 438.7 833 430.6 843.2 427M832 448C837.1 437.8 845.3 429.8 850.4 421.6M832 448C840.8 443.6 851.6 442.5 854.1 430.7M832 448C843.1 443.3 855.1 445.6 864.9 443.5M832 448C842.1 447.5 849.6 456.9 859.2 453.2M832 448C836.5 455.6 847.3 453.5 850 461.7M832 448C837.2 458.6 843.6 468.4 850.4 475.9M832 448C829.5 458.9 840 466.9 836.5 476.6M832 448C828.9 459.8 834 472 828.4 481.9" stroke="#7a4e2a" stroke-width="0.9" fill="none" stroke-linecap="round"/>
<path d="M772 448C778.8 445.7 775.9 435.7 784.4 435.8M772 448C779.3 446.1 784.2 440.9 788.2 436M772 448C776.5 445.1 781.9 445.7 786 444M772 448C778 448.5 783.4 444.8 788.8 446.3" stroke="#7a4e2a" stroke-width="0.8" fill="none" stroke-linecap="round"/>
<path d="M598 312C598.9 314.5 601.2 321.8 603.5 327C605.8 332.2 609.1 338.2 612 343C614.9 347.8 616.8 350.7 621 356C625.2 361.3 631.3 368.8 637 375C642.7 381.2 648.5 386.8 655 393C661.5 399.2 669.2 406.2 676 412C682.8 417.8 687.3 423.3 696 428C704.7 432.7 717.3 436.9 728 440C738.7 443.1 748 445.1 760 446.5C772 447.9 782.6 448 800 448.5C817.4 449 853.8 449.3 864.5 449.5" stroke="#7d5a33" stroke-width="7.4" fill="none"/>
<path d="M598 312C598.9 314.5 601.2 321.8 603.5 327C605.8 332.2 609.1 338.2 612 343C614.9 347.8 616.8 350.7 621 356C625.2 361.3 631.3 368.8 637 375C642.7 381.2 648.5 386.8 655 393C661.5 399.2 669.2 406.2 676 412C682.8 417.8 687.3 423.3 696 428C704.7 432.7 717.3 436.9 728 440C738.7 443.1 748 445.1 760 446.5C772 447.9 782.6 448 800 448.5C817.4 449 853.8 449.3 864.5 449.5" stroke="#c59a62" stroke-width="5.800000000000001" fill="none"/>
<path d="M645 262C645.2 266.7 645.9 282.5 646.5 290C647.1 297.5 647.5 299.5 648.5 307C649.5 314.5 650.7 324.5 652.5 335C654.3 345.5 657.1 360.5 659.5 370C661.9 379.5 664.2 385.7 667 392C669.8 398.3 671.7 402.5 676 408C680.3 413.5 690.2 422.2 693 425" stroke="#7d5a33" stroke-width="7.2" fill="none"/>
<path d="M645 262C645.2 266.7 645.9 282.5 646.5 290C647.1 297.5 647.5 299.5 648.5 307C649.5 314.5 650.7 324.5 652.5 335C654.3 345.5 657.1 360.5 659.5 370C661.9 379.5 664.2 385.7 667 392C669.8 398.3 671.7 402.5 676 408C680.3 413.5 690.2 422.2 693 425" stroke="#c59a62" stroke-width="5.6000000000000005" fill="none"/>
<path d="M645 262C645.2 266.7 645.9 282.5 646.5 290C647.1 297.5 648.2 304.2 648.5 307" stroke="#e6d9a8" stroke-width="4.6" fill="none"/>
<path d="M642.2 260L647.8 260L649.6 279L641.6 279Z" fill="#7b5a34"/>
<path d="M642.6 260L647.4 260L648 268L642.2 268Z" fill="#a08a5a"/>
<path d="M645 262C645.2 266.7 645.9 282.5 646.5 290C647.1 297.5 647.5 299.5 648.5 307C649.5 314.5 650.7 324.5 652.5 335C654.3 345.5 657.1 360.5 659.5 370C661.9 379.5 664.2 385.7 667 392C669.8 398.3 671.7 402.5 676 408C680.3 413.5 690.2 422.2 693 425" stroke="#6e4726" stroke-width="8.2" fill="none" stroke-dasharray="0 39.5 26 9999"/>
<path d="M645 262C645.2 266.7 645.9 282.5 646.5 290C647.1 297.5 647.5 299.5 648.5 307C649.5 314.5 650.7 324.5 652.5 335C654.3 345.5 657.1 360.5 659.5 370C661.9 379.5 664.2 385.7 667 392C669.8 398.3 671.7 402.5 676 408C680.3 413.5 690.2 422.2 693 425" stroke="#3a2415" stroke-width="8.2" fill="none" stroke-dasharray="0 57.6 9 9999"/>
<path d="M645 262C645.2 266.7 645.9 282.5 646.5 290C647.1 297.5 647.5 299.5 648.5 307C649.5 314.5 650.7 324.5 652.5 335C654.3 345.5 657.1 360.5 659.5 370C661.9 379.5 664.2 385.7 667 392C669.8 398.3 671.7 402.5 676 408C680.3 413.5 690.2 422.2 693 425" stroke="#6e4726" stroke-width="7.6" fill="none" stroke-dasharray="0 104.4 22 9999"/>
<path d="M645 262C645.2 266.7 645.9 282.5 646.5 290C647.1 297.5 647.5 299.5 648.5 307C649.5 314.5 650.7 324.5 652.5 335C654.3 345.5 657.1 360.5 659.5 370C661.9 379.5 664.2 385.7 667 392C669.8 398.3 671.7 402.5 676 408C680.3 413.5 690.2 422.2 693 425" stroke="#3a2415" stroke-width="7.8" fill="none" stroke-dasharray="0 119.7 9 9999"/>
<path d="M598 312C598.9 314.5 601.2 321.8 603.5 327C605.8 332.2 609.1 338.2 612 343C614.9 347.8 616.8 350.7 621 356C625.2 361.3 631.3 368.8 637 375C642.7 381.2 648.5 386.8 655 393C661.5 399.2 669.2 406.2 676 412C682.8 417.8 687.3 423.3 696 428C704.7 432.7 717.3 436.9 728 440C738.7 443.1 748 445.1 760 446.5C772 447.9 782.6 448 800 448.5C817.4 449 853.8 449.3 864.5 449.5" stroke="#8a7448" stroke-width="6.6" fill="none" stroke-dasharray="0 0 8 9999"/>
<path d="M598 312C598.9 314.5 601.2 321.8 603.5 327C605.8 332.2 609.1 338.2 612 343C614.9 347.8 616.8 350.7 621 356C625.2 361.3 631.3 368.8 637 375C642.7 381.2 648.5 386.8 655 393C661.5 399.2 669.2 406.2 676 412C682.8 417.8 687.3 423.3 696 428C704.7 432.7 717.3 436.9 728 440C738.7 443.1 748 445.1 760 446.5C772 447.9 782.6 448 800 448.5C817.4 449 853.8 449.3 864.5 449.5" stroke="#6e4726" stroke-width="7.8" fill="none" stroke-dasharray="0 55.8 22 9999"/>
<path d="M598 312C598.9 314.5 601.2 321.8 603.5 327C605.8 332.2 609.1 338.2 612 343C614.9 347.8 616.8 350.7 621 356C625.2 361.3 631.3 368.8 637 375C642.7 381.2 648.5 386.8 655 393C661.5 399.2 669.2 406.2 676 412C682.8 417.8 687.3 423.3 696 428C704.7 432.7 717.3 436.9 728 440C738.7 443.1 748 445.1 760 446.5C772 447.9 782.6 448 800 448.5C817.4 449 853.8 449.3 864.5 449.5" stroke="#3a2415" stroke-width="8" fill="none" stroke-dasharray="0 73.7 9 9999"/>
<path d="M598 312C598.9 314.5 601.2 321.8 603.5 327C605.8 332.2 609.1 338.2 612 343C614.9 347.8 616.8 350.7 621 356C625.2 361.3 631.3 368.8 637 375C642.7 381.2 648.5 386.8 655 393C661.5 399.2 669.2 406.2 676 412C682.8 417.8 687.3 423.3 696 428C704.7 432.7 717.3 436.9 728 440C738.7 443.1 748 445.1 760 446.5C772 447.9 782.6 448 800 448.5C817.4 449 853.8 449.3 864.5 449.5" stroke="#3a2415" stroke-width="7.6" fill="none" stroke-dasharray="0 117.9 15 9999"/>
<path d="M598 312C598.9 314.5 601.2 321.8 603.5 327C605.8 332.2 609.1 338.2 612 343C614.9 347.8 616.8 350.7 621 356C625.2 361.3 631.3 368.8 637 375C642.7 381.2 648.5 386.8 655 393C661.5 399.2 669.2 406.2 676 412C682.8 417.8 687.3 423.3 696 428C704.7 432.7 717.3 436.9 728 440C738.7 443.1 748 445.1 760 446.5C772 447.9 782.6 448 800 448.5C817.4 449 853.8 449.3 864.5 449.5" stroke="#3a2415" stroke-width="7.6" fill="none" stroke-dasharray="0 156.4 13 9999"/>
<path d="M598 312C598.9 314.5 601.2 321.8 603.5 327C605.8 332.2 609.1 338.2 612 343C614.9 347.8 616.8 350.7 621 356C625.2 361.3 631.3 368.8 637 375C642.7 381.2 648.5 386.8 655 393C661.5 399.2 669.2 406.2 676 412C682.8 417.8 687.3 423.3 696 428C704.7 432.7 717.3 436.9 728 440C738.7 443.1 748 445.1 760 446.5C772 447.9 782.6 448 800 448.5C817.4 449 853.8 449.3 864.5 449.5" stroke="#3a2415" stroke-width="7.2" fill="none" stroke-dasharray="0 206.5 17 9999"/>
<path d="M598 312C598.9 314.5 601.2 321.8 603.5 327C605.8 332.2 609.1 338.2 612 343C614.9 347.8 616.8 350.7 621 356C625.2 361.3 631.3 368.8 637 375C642.7 381.2 648.5 386.8 655 393C661.5 399.2 669.2 406.2 676 412C682.8 417.8 687.3 423.3 696 428C704.7 432.7 717.3 436.9 728 440C738.7 443.1 748 445.1 760 446.5C772 447.9 782.6 448 800 448.5C817.4 449 853.8 449.3 864.5 449.5" stroke="#3a2415" stroke-width="6.8" fill="none" stroke-dasharray="0 282 19 9999"/>
<path d="M727.5 190C727.2 192.5 726.2 196.7 725.5 205C724.8 213.3 723.6 229.2 723 240C722.4 250.8 722.2 260 722 270C721.8 280 721.2 289 721.5 300C721.8 311 723.2 330 723.5 336" stroke="#8a7440" stroke-width="4.8" fill="none"/>
<path d="M727.5 190C727.2 192.5 726.2 196.7 725.5 205C724.8 213.3 723.6 229.2 723 240C722.4 250.8 722.2 260 722 270C721.8 280 721.2 289 721.5 300C721.8 311 723.2 330 723.5 336" stroke="#cbb873" stroke-width="3.1999999999999997" fill="none"/>
<path d="M759.5 152C759.1 155.3 758.3 163.2 757 172C755.7 180.8 753 194.5 751.5 205C750 215.5 748.8 224.2 748 235C747.2 245.8 747.1 257.5 747 270C746.9 282.5 747.1 298.7 747.5 310C747.9 321.3 749.2 333.3 749.5 338" stroke="#8a7440" stroke-width="5.4" fill="none"/>
<path d="M759.5 152C759.1 155.3 758.3 163.2 757 172C755.7 180.8 753 194.5 751.5 205C750 215.5 748.8 224.2 748 235C747.2 245.8 747.1 257.5 747 270C746.9 282.5 747.1 298.7 747.5 310C747.9 321.3 749.2 333.3 749.5 338" stroke="#cbb873" stroke-width="3.8000000000000003" fill="none"/>
<path d="M723.5 336C724.2 341.7 725.8 360.2 727.5 370C729.2 379.8 731.8 387.7 734 395C736.2 402.3 738 406.2 741 414C744 421.8 750.2 437.3 752 442" stroke="#7d5a33" stroke-width="6.6" fill="none"/>
<path d="M723.5 336C724.2 341.7 725.8 360.2 727.5 370C729.2 379.8 731.8 387.7 734 395C736.2 402.3 738 406.2 741 414C744 421.8 750.2 437.3 752 442" stroke="#c59a62" stroke-width="5.2" fill="none"/>
<path d="M749.5 338C749.5 345.7 749.7 371.5 749.5 384C749.3 396.5 747.3 403 748.5 413C749.7 423 755.2 438.8 756.5 444" stroke="#7d5a33" stroke-width="7" fill="none"/>
<path d="M749.5 338C749.5 345.7 749.7 371.5 749.5 384C749.3 396.5 747.3 403 748.5 413C749.7 423 755.2 438.8 756.5 444" stroke="#c59a62" stroke-width="5.6" fill="none"/>
<linearGradient id="shg" x1="0" y1="0" x2="0" y2="1"><stop offset="0" stop-color="#5e3517"/><stop offset="0.5" stop-color="#8a5427"/><stop offset="0.8" stop-color="#c39a5e"/><stop offset="1" stop-color="#d0b57c"/></linearGradient>
<path d="M725.6 196C728.8 198.4 730.9 204.8 728.1 212L723.1 212C720.3 204.8 722.4 198.4 725.6 196Z" fill="url(#shg)"/>
<path d="M723 232C726.2 234.4 728.3 240.8 725.5 248L720.5 248C717.7 240.8 719.8 234.4 723 232Z" fill="url(#shg)"/>
<path d="M722 261C725.2 263.4 727.3 269.8 724.6 277L719.5 277C716.7 269.8 718.8 263.4 722 261Z" fill="url(#shg)"/>
<path d="M721.7 298C724.9 300.4 727 306.8 724.2 314L719.1 314C716.4 306.8 718.5 300.4 721.7 298Z" fill="url(#shg)"/>
<path d="M757.8 157C761.8 159.7 764.3 166.9 760.9 175L754.8 175C751.4 166.9 753.9 159.7 757.8 157Z" fill="url(#shg)"/>
<path d="M751.6 195C755.6 197.7 758.1 204.9 754.7 213L748.6 213C745.2 204.9 747.7 197.7 751.6 195Z" fill="url(#shg)"/>
<path d="M748 225.5C752 228.2 754.5 235.4 751.1 243.5L745 243.5C741.6 235.4 744.1 228.2 748 225.5Z" fill="url(#shg)"/>
<path d="M747 260C750.9 262.7 753.4 269.9 750.1 278L743.9 278C740.6 269.9 743.1 262.7 747 260Z" fill="url(#shg)"/>
<path d="M747.5 300C751.4 302.7 753.9 309.9 750.5 318L744.4 318C741 309.9 743.5 302.7 747.5 300Z" fill="url(#shg)"/>
<path d="M745.6 318h5.2v22h-5.2Z" fill="#efe6c6"/>
<path d="M727.5 190C727.2 192.5 726.2 196.7 725.5 205C724.8 213.3 723.6 229.2 723 240C722.4 250.8 722.2 260 722 270C721.8 280 721.2 289 721.5 300C721.8 311 722.5 324.3 723.5 336C724.5 347.7 725.8 360.2 727.5 370C729.2 379.8 731.8 387.7 734 395C736.2 402.3 738 406.2 741 414C744 421.8 750.2 437.3 752 442" stroke="#6e4726" stroke-width="7.8" fill="none" stroke-dasharray="0 157.5 24 9999"/>
<path d="M727.5 190C727.2 192.5 726.2 196.7 725.5 205C724.8 213.3 723.6 229.2 723 240C722.4 250.8 722.2 260 722 270C721.8 280 721.2 289 721.5 300C721.8 311 722.5 324.3 723.5 336C724.5 347.7 725.8 360.2 727.5 370C729.2 379.8 731.8 387.7 734 395C736.2 402.3 738 406.2 741 414C744 421.8 750.2 437.3 752 442" stroke="#3a2415" stroke-width="7.8" fill="none" stroke-dasharray="0 175.2 9 9999"/>
<path d="M727.5 190C727.2 192.5 726.2 196.7 725.5 205C724.8 213.3 723.6 229.2 723 240C722.4 250.8 722.2 260 722 270C721.8 280 721.2 289 721.5 300C721.8 311 722.5 324.3 723.5 336C724.5 347.7 725.8 360.2 727.5 370C729.2 379.8 731.8 387.7 734 395C736.2 402.3 738 406.2 741 414C744 421.8 750.2 437.3 752 442" stroke="#3a2415" stroke-width="7.2" fill="none" stroke-dasharray="0 222.6 17 9999"/>
<path d="M759.5 152C759.1 155.3 758.3 163.2 757 172C755.7 180.8 753 194.5 751.5 205C750 215.5 748.8 224.2 748 235C747.2 245.8 747.1 257.5 747 270C746.9 282.5 747.1 298.7 747.5 310C747.9 321.3 749.2 325.7 749.5 338C749.8 350.3 749.7 371.5 749.5 384C749.3 396.5 747.3 403 748.5 413C749.7 423 755.2 438.8 756.5 444" stroke="#6e4726" stroke-width="8.6" fill="none" stroke-dasharray="0 192.8 26 9999"/>
<path d="M759.5 152C759.1 155.3 758.3 163.2 757 172C755.7 180.8 753 194.5 751.5 205C750 215.5 748.8 224.2 748 235C747.2 245.8 747.1 257.5 747 270C746.9 282.5 747.1 298.7 747.5 310C747.9 321.3 749.2 325.7 749.5 338C749.8 350.3 749.7 371.5 749.5 384C749.3 396.5 747.3 403 748.5 413C749.7 423 755.2 438.8 756.5 444" stroke="#3a2415" stroke-width="8.6" fill="none" stroke-dasharray="0 214.6 9 9999"/>
<path d="M759.5 152C759.1 155.3 758.3 163.2 757 172C755.7 180.8 753 194.5 751.5 205C750 215.5 748.8 224.2 748 235C747.2 245.8 747.1 257.5 747 270C746.9 282.5 747.1 298.7 747.5 310C747.9 321.3 749.2 325.7 749.5 338C749.8 350.3 749.7 371.5 749.5 384C749.3 396.5 747.3 403 748.5 413C749.7 423 755.2 438.8 756.5 444" stroke="#3a2415" stroke-width="7.4" fill="none" stroke-dasharray="0 257.1 15 9999"/>
<clipPath id="cn1"><path d="M727.6 150.5C731.9 150.5 734.4 167.5 733.9 179.7C733.6 190 730.4 191 727.6 191C724.9 191 721.6 190 721.4 179.7C720.9 167.5 723.4 150.5 727.6 150.5Z"/></clipPath>
<g clip-path="url(#cn1)"><rect x="715.1" y="150.5" width="25.0" height="40.5" fill="#a9713d"/>
<path d="M713.6 152.1h0.5M716.9 152.1h0.5M720.2 152.1h0.5M723.5 152.1h0.5M726.8 152.1h0.5M730.1 152.1h0.5M733.4 152.1h0.5M736.7 152.1h0.5M740 152.1h0.5M715.2 155.2h0.5M718.6 155.2h0.5M721.9 155.2h0.5M725.2 155.2h0.5M728.5 155.2h0.5M731.8 155.2h0.5M735.1 155.2h0.5M738.4 155.2h0.5M741.7 155.2h0.5M713.6 158.3h0.5M716.9 158.3h0.5M720.2 158.3h0.5M723.5 158.3h0.5M726.8 158.3h0.5M730.1 158.3h0.5M733.4 158.3h0.5M736.7 158.3h0.5M740 158.3h0.5M715.2 161.4h0.5M718.6 161.4h0.5M721.9 161.4h0.5M725.2 161.4h0.5M728.5 161.4h0.5M731.8 161.4h0.5M735.1 161.4h0.5M738.4 161.4h0.5M741.7 161.4h0.5M713.6 164.5h0.5M716.9 164.5h0.5M720.2 164.5h0.5M723.5 164.5h0.5M726.8 164.5h0.5M730.1 164.5h0.5M733.4 164.5h0.5M736.7 164.5h0.5M740 164.5h0.5M715.2 167.6h0.5M718.6 167.6h0.5M721.9 167.6h0.5M725.2 167.6h0.5M728.5 167.6h0.5M731.8 167.6h0.5M735.1 167.6h0.5M738.4 167.6h0.5M741.7 167.6h0.5M713.6 170.7h0.5M716.9 170.7h0.5M720.2 170.7h0.5M723.5 170.7h0.5M726.8 170.7h0.5M730.1 170.7h0.5M733.4 170.7h0.5M736.7 170.7h0.5M740 170.7h0.5M715.2 173.8h0.5M718.6 173.8h0.5M721.9 173.8h0.5M725.2 173.8h0.5M728.5 173.8h0.5M731.8 173.8h0.5M735.1 173.8h0.5M738.4 173.8h0.5M741.7 173.8h0.5M713.6 176.9h0.5M716.9 176.9h0.5M720.2 176.9h0.5M723.5 176.9h0.5M726.8 176.9h0.5M730.1 176.9h0.5M733.4 176.9h0.5M736.7 176.9h0.5M740 176.9h0.5M715.2 180h0.5M718.6 180h0.5M721.9 180h0.5M725.2 180h0.5M728.5 180h0.5M731.8 180h0.5M735.1 180h0.5M738.4 180h0.5M741.7 180h0.5M713.6 183.1h0.5M716.9 183.1h0.5M720.2 183.1h0.5M723.5 183.1h0.5M726.8 183.1h0.5M730.1 183.1h0.5M733.4 183.1h0.5M736.7 183.1h0.5M740 183.1h0.5M715.2 186.2h0.5M718.6 186.2h0.5M721.9 186.2h0.5M725.2 186.2h0.5M728.5 186.2h0.5M731.8 186.2h0.5M735.1 186.2h0.5M738.4 186.2h0.5M741.7 186.2h0.5M713.6 189.3h0.5M716.9 189.3h0.5M720.2 189.3h0.5M723.5 189.3h0.5M726.8 189.3h0.5M730.1 189.3h0.5M733.4 189.3h0.5M736.7 189.3h0.5M740 189.3h0.5M715.2 192.4h0.5M718.6 192.4h0.5M721.9 192.4h0.5M725.2 192.4h0.5M728.5 192.4h0.5M731.8 192.4h0.5M735.1 192.4h0.5M738.4 192.4h0.5M741.7 192.4h0.5" stroke="#dcae80" stroke-width="2.1" fill="none" stroke-linecap="round"/>
</g>
<clipPath id="cn2"><path d="M760.5 104C766.5 104 770 125 769.2 140C768.9 153 764.4 154 760.5 154C756.6 154 752.1 153 751.8 140C751 125 754.5 104 760.5 104Z"/></clipPath>
<g clip-path="url(#cn2)"><rect x="743.0" y="104" width="35.0" height="50" fill="#a9713d"/>
<path d="M746.5 105.6h0.5M749.8 105.6h0.5M753.1 105.6h0.5M756.4 105.6h0.5M759.7 105.6h0.5M763 105.6h0.5M766.3 105.6h0.5M769.6 105.6h0.5M772.9 105.6h0.5M748.1 108.7h0.5M751.5 108.7h0.5M754.8 108.7h0.5M758.1 108.7h0.5M761.4 108.7h0.5M764.6 108.7h0.5M768 108.7h0.5M771.2 108.7h0.5M774.6 108.7h0.5M746.5 111.8h0.5M749.8 111.8h0.5M753.1 111.8h0.5M756.4 111.8h0.5M759.7 111.8h0.5M763 111.8h0.5M766.3 111.8h0.5M769.6 111.8h0.5M772.9 111.8h0.5M748.1 114.9h0.5M751.5 114.9h0.5M754.8 114.9h0.5M758.1 114.9h0.5M761.4 114.9h0.5M764.6 114.9h0.5M768 114.9h0.5M771.2 114.9h0.5M774.6 114.9h0.5M746.5 118h0.5M749.8 118h0.5M753.1 118h0.5M756.4 118h0.5M759.7 118h0.5M763 118h0.5M766.3 118h0.5M769.6 118h0.5M772.9 118h0.5M748.1 121.1h0.5M751.5 121.1h0.5M754.8 121.1h0.5M758.1 121.1h0.5M761.4 121.1h0.5M764.6 121.1h0.5M768 121.1h0.5M771.2 121.1h0.5M774.6 121.1h0.5M746.5 124.2h0.5M749.8 124.2h0.5M753.1 124.2h0.5M756.4 124.2h0.5M759.7 124.2h0.5M763 124.2h0.5M766.3 124.2h0.5M769.6 124.2h0.5M772.9 124.2h0.5M748.1 127.3h0.5M751.5 127.3h0.5M754.8 127.3h0.5M758.1 127.3h0.5M761.4 127.3h0.5M764.6 127.3h0.5M768 127.3h0.5M771.2 127.3h0.5M774.6 127.3h0.5M746.5 130.4h0.5M749.8 130.4h0.5M753.1 130.4h0.5M756.4 130.4h0.5M759.7 130.4h0.5M763 130.4h0.5M766.3 130.4h0.5M769.6 130.4h0.5M772.9 130.4h0.5M748.1 133.5h0.5M751.5 133.5h0.5M754.8 133.5h0.5M758.1 133.5h0.5M761.4 133.5h0.5M764.6 133.5h0.5M768 133.5h0.5M771.2 133.5h0.5M774.6 133.5h0.5M746.5 136.6h0.5M749.8 136.6h0.5M753.1 136.6h0.5M756.4 136.6h0.5M759.7 136.6h0.5M763 136.6h0.5M766.3 136.6h0.5M769.6 136.6h0.5M772.9 136.6h0.5M748.1 139.7h0.5M751.5 139.7h0.5M754.8 139.7h0.5M758.1 139.7h0.5M761.4 139.7h0.5M764.6 139.7h0.5M768 139.7h0.5M771.2 139.7h0.5M774.6 139.7h0.5M746.5 142.8h0.5M749.8 142.8h0.5M753.1 142.8h0.5M756.4 142.8h0.5M759.7 142.8h0.5M763 142.8h0.5M766.3 142.8h0.5M769.6 142.8h0.5M772.9 142.8h0.5M748.1 145.9h0.5M751.5 145.9h0.5M754.8 145.9h0.5M758.1 145.9h0.5M761.4 145.9h0.5M764.6 145.9h0.5M768 145.9h0.5M771.2 145.9h0.5M774.6 145.9h0.5M746.5 149h0.5M749.8 149h0.5M753.1 149h0.5M756.4 149h0.5M759.7 149h0.5M763 149h0.5M766.3 149h0.5M769.6 149h0.5M772.9 149h0.5M748.1 152.1h0.5M751.5 152.1h0.5M754.8 152.1h0.5M758.1 152.1h0.5M761.4 152.1h0.5M764.6 152.1h0.5M768 152.1h0.5M771.2 152.1h0.5M774.6 152.1h0.5M746.5 155.2h0.5M749.8 155.2h0.5M753.1 155.2h0.5M756.4 155.2h0.5M759.7 155.2h0.5M763 155.2h0.5M766.3 155.2h0.5M769.6 155.2h0.5M772.9 155.2h0.5" stroke="#dcae80" stroke-width="2.1" fill="none" stroke-linecap="round"/>
</g>
<ellipse cx="702.5" cy="438.5" rx="8.4" ry="9.6" fill="#6a4424"/><ellipse cx="700.5" cy="436.5" rx="4.5" ry="6" fill="#8b5d33"/>
<ellipse cx="766.5" cy="458.5" rx="10.4" ry="9.4" fill="#6a4424"/><ellipse cx="764" cy="456.5" rx="5.5" ry="6" fill="#8b5d33"/>
<path d="M1061 420C1061.4 433.7 1063.2 447.1 1067.8 458.2M1061 420C1057.5 431.2 1053.3 442.1 1052.5 452.3M1061 420C1051.9 428.1 1048.3 440.7 1038.1 445.8" stroke="#7a4e2a" stroke-width="0.8" fill="none" stroke-linecap="round"/>
<path d="M1059 438C1058.8 442.2 1063.6 445.2 1060.2 449.5M1059 438C1062.7 443.5 1053.9 447.1 1058.6 452.1M1059 438C1057.8 442.7 1056.5 447.4 1048.8 444.7" stroke="#7a4e2a" stroke-width="0.6" fill="none" stroke-linecap="round"/>
<path d="M1122.5 390C1118.4 399.7 1124.4 408.9 1123.6 417.1M1122.5 390C1115.9 398.2 1110.4 406.8 1114.3 417.6M1122.5 390C1120.8 401.3 1115.7 410.6 1104.4 414.2" stroke="#7a4e2a" stroke-width="0.8" fill="none" stroke-linecap="round"/>
<path d="M1120.5 405C1125.4 407.2 1124.3 412.5 1126 415.7M1120.5 405C1115.3 407.1 1117.8 411.4 1118.4 414.6M1120.5 405C1118.1 409 1112.2 409 1111.9 414.4" stroke="#7a4e2a" stroke-width="0.6" fill="none" stroke-linecap="round"/>
<path d="M1234 402C1236.4 411.6 1237.1 421.3 1233.4 429.8M1234 402C1235.3 409.7 1226.1 415.7 1233.2 423.3M1234 402C1230.7 412 1229.6 423.1 1219.4 428.4" stroke="#7a4e2a" stroke-width="0.8" fill="none" stroke-linecap="round"/>
<path d="M1232 417C1228.3 421.7 1239.1 422 1232.3 427.1M1232 417C1232.2 422.1 1230.7 427 1230.7 431.3M1232 417C1228.8 418.9 1228.7 425.6 1221.6 420.9" stroke="#7a4e2a" stroke-width="0.6" fill="none" stroke-linecap="round"/>
<path d="M975 400C971.7 399.3 962 397.1 955 396C948 394.9 936.7 393.9 933 393.5M997 412.5C994.2 410.6 984.9 404.2 980 401C975.1 397.8 972.5 396.8 967.5 393C962.5 389.2 956.1 383.2 950 378C943.9 372.8 934.2 364.7 931 362M1096 393C1093.3 394.8 1085.7 400.6 1080 404C1074.3 407.4 1070.3 411.8 1062 413.5C1053.7 415.2 1040.8 414.7 1030 414.5C1019.2 414.3 1009.5 413.1 997 412.5C984.5 411.9 969.3 411.7 955 411C940.7 410.3 918.3 408.9 911 408.5M1027 345C1028.5 340.8 1032.5 328.5 1036 320C1039.5 311.5 1046 298.3 1048 294M1030 362C1029.7 357.5 1028.6 345 1028 335C1027.4 325 1026.6 307.5 1026.3 302M1040 394C1038.3 389.7 1033.5 375.3 1030 368C1026.5 360.7 1022.7 355.8 1019 350C1015.3 344.2 1011.7 340 1008 333C1004.3 326 1000.5 316.2 997 308C993.5 299.8 988.7 288 987 284M1100 364C1096 360.7 1084.3 350.7 1076 344C1067.7 337.3 1054.3 327.3 1050 324M1093 340C1091.2 336.3 1085.3 324.8 1082 318C1078.7 311.2 1074.5 302.2 1073 299M1107 386C1105.7 381.7 1101.7 370.2 1099 360C1096.3 349.8 1093.8 337 1091 325C1088.2 313 1084.8 300.2 1082 288C1079.2 275.8 1075.8 258 1074.5 252M1131 382C1129.3 375.8 1124.2 356.7 1121 345C1117.8 333.3 1115 323.2 1112 312C1109 300.8 1105.5 287.7 1103 278C1100.5 268.3 1098 258 1097 254M1112 384C1112.5 380.3 1113.7 369.3 1115 362C1116.3 354.7 1117.5 350 1120 340C1122.5 330 1127 313 1130 302C1133 291 1135.8 282 1138 274C1140.2 266 1142.2 257.3 1143 254M1152 385C1152.2 379.2 1152.7 360.8 1153 350C1153.3 339.2 1153.8 329.3 1154 320C1154.2 310.7 1154 298.3 1154 294M1182.5 296C1182.2 290 1181.5 271 1181 260C1180.5 249 1179.8 235 1179.5 230M1181 352C1183.3 349 1190.2 340.2 1195 334C1199.8 327.8 1207.5 318.2 1210 315M1180 389C1180.2 382.5 1180.6 364.8 1181 350C1181.4 335.2 1182.7 313.3 1182.5 300C1182.3 286.7 1181.8 280 1180 270C1178.2 260 1174.5 248.7 1172 240C1169.5 231.3 1166.8 223.8 1165 218C1163.2 212.2 1161.7 207.2 1161 205M1238 396C1236 393.3 1229.2 385 1226 380C1222.8 375 1219.3 371.7 1219 366C1218.7 360.3 1222.2 352.2 1224 346C1225.8 339.8 1229 331.8 1230 329M1133 382.6C1129.2 383.3 1117.2 384.9 1110 387C1102.8 389.1 1098.3 393.3 1090 395C1081.7 396.7 1069 397.3 1060 397C1051 396.7 1044.3 395.2 1036 393C1027.7 390.8 1017.8 387.6 1010 384C1002.2 380.4 992.5 373.6 989 371.5M1133 382.6C1138.8 384 1156.8 388.9 1168 391C1179.2 393.1 1189.7 394 1200 395C1210.3 396 1219.5 397.2 1230 397C1240.5 396.8 1257.5 394.5 1263 394" stroke="#6fb534" stroke-width="4.5" fill="none" stroke-linecap="round" stroke-linejoin="round"/>
<path d="M974.5 399.9L968.5 403.3M974.5 399.9L970.3 394.4M969.6 398.8L963.6 402.2M969.6 398.8L965.5 393.3M964.7 397.8L958.7 401.2M964.7 397.8L960.6 392.3M959.8 396.8L953.9 400.4M959.8 396.8L955.6 391.4M954.9 396L949.1 399.7M954.9 396L950.5 390.7M949.9 395.3L944.2 399.2M949.9 395.3L945.4 390.2M945 394.7L939.3 398.7M945 394.7L940.3 389.7M940 394.2L935.3 397.6M940 394.2L936.1 390M935 393.7L931.9 396M935 393.7L932.4 390.9M933 393.5L929 393.1M996.6 412.2L989.7 413.1M996.6 412.2L994.8 405.5M992.5 409.4L985.6 410.2M992.5 409.4L990.7 402.7M988.3 406.6L981.5 407.4M988.3 406.6L986.6 399.9M984.2 403.8L977.3 404.7M984.2 403.8L982.4 397.1M980 401L973.2 401.9M980 401L978.2 394.4M975.8 398.4L969 399.7M975.8 398.4L973.6 391.8M971.5 395.8L964.7 396.8M971.5 395.8L969.6 389.2M967.4 392.9L960.5 393.4M967.4 392.9L966.1 386.2M963.5 389.8L956.6 389.9M963.5 389.8L962.5 382.9M959.7 386.5L952.8 386.5M959.7 386.5L958.8 379.7M956 383.2L949.1 383.2M956 383.2L955.1 376.4M952.2 379.9L945.3 379.9M952.2 379.9L951.3 373.1M948.4 376.7L941.5 376.8M948.4 376.7L947.4 369.8M944.6 373.4L937.7 373.6M944.6 373.4L943.6 366.6M940.8 370.2L933.9 370.4M940.8 370.2L939.7 363.4M936.9 367L930.9 367.1M936.9 367L936 361M933.1 363.8L929 363.9M933.1 363.8L932.5 359.7M931 362L927.9 359.4M1095.6 393.3L1093.9 400M1095.6 393.3L1088.7 392.5M1091.5 396.2L1090 402.9M1091.5 396.2L1084.7 395.5M1087.4 399.1L1085.8 405.8M1087.4 399.1L1080.6 398.3M1083.3 401.9L1081.5 408.6M1083.3 401.9L1076.5 401M1079.1 404.6L1077.2 411.2M1079.1 404.6L1072.3 403.5M1075 407.4L1073.3 414.1M1075 407.4L1068.1 406.6M1070.8 410.1L1068.6 416.7M1070.8 410.1L1064 408.8M1066.3 412.3L1063 418.4M1066.3 412.3L1059.8 409.8M1061.5 413.6L1057.2 419.1M1061.5 413.6L1055.5 410.1M1056.5 414.3L1051.8 419.3M1056.5 414.3L1050.9 410.3M1051.5 414.6L1046.5 419.4M1051.5 414.6L1046.2 410.3M1046.5 414.7L1041.4 419.3M1046.5 414.7L1041.3 410.2M1041.5 414.7L1036.3 419.2M1041.5 414.7L1036.4 410.1M1036.5 414.6L1031.2 419.1M1036.5 414.6L1031.4 410M1031.5 414.5L1026.2 419M1031.5 414.5L1026.4 409.9M1026.5 414.4L1021.2 418.8M1026.5 414.4L1021.5 409.7M1021.5 414.2L1016.1 418.4M1021.5 414.2L1016.6 409.3M1016.5 413.8L1011 418M1016.5 413.8L1011.7 408.9M1011.5 413.5L1006 417.6M1011.5 413.5L1006.7 408.5M1006.6 413.1L1001.1 417.2M1006.6 413.1L1001.7 408.2M1001.6 412.7L996.1 417M1001.6 412.7L996.7 407.9M996.6 412.5L991.2 416.8M996.6 412.5L991.6 407.7M991.6 412.3L986.2 416.6M991.6 412.3L986.6 407.5M986.6 412.1L981.2 416.5M986.6 412.1L981.6 407.4M981.6 411.9L976.3 416.3M981.6 411.9L976.5 407.2M976.6 411.8L971.3 416.2M976.6 411.8L971.5 407.1M971.6 411.6L966.3 416M971.6 411.6L966.6 406.9M966.6 411.5L961.3 415.8M966.6 411.5L961.6 406.7M961.6 411.3L956.2 415.6M961.6 411.3L956.6 406.5M956.6 411.1L951.2 415.4M956.6 411.1L951.6 406.3M951.6 410.8L946.2 415.1M951.6 410.8L946.7 406M946.6 410.6L941.2 414.8M946.6 410.6L941.7 405.8M941.6 410.3L936.2 414.6M941.6 410.3L936.7 405.5M936.6 410L931.2 414.3M936.6 410L931.7 405.2M931.6 409.7L926.2 414M931.6 409.7L926.7 404.9M926.6 409.4L921.2 413.7M926.6 409.4L921.7 404.6M921.7 409.1L916.2 413.4M921.7 409.1L916.8 404.3M916.7 408.8L912.5 412.1M916.7 408.8L912.9 405.1M911.7 408.5L909 410.6M911.7 408.5L909.3 406.2M911 408.5L907 408.3M1027.2 344.5L1024.6 338.1M1027.2 344.5L1033.2 341.2M1028.8 339.8L1026.2 333.4M1028.8 339.8L1034.8 336.4M1030.4 335.1L1027.8 328.7M1030.4 335.1L1036.4 331.7M1032.1 330.4L1029.5 323.9M1032.1 330.4L1038.1 327M1033.8 325.7L1031.4 319.2M1033.8 325.7L1039.9 322.4M1035.6 321L1033.3 314.5M1035.6 321L1041.7 317.9M1037.5 316.4L1035.5 309.8M1037.5 316.4L1043.8 313.5M1039.6 311.8L1037.6 305.2M1039.6 311.8L1045.9 309M1041.7 307.3L1039.8 300.7M1041.7 307.3L1048 304.5M1043.8 302.8L1042 296.2M1043.8 302.8L1050.1 300.1M1046 298.3L1044.7 293.5M1046 298.3L1050.5 296.3M1048 294L1049.7 290.4M1030 361.5L1025 356.7M1030 361.5L1034.1 356M1029.6 356.5L1024.6 351.7M1029.6 356.5L1033.7 351M1029.2 351.5L1024.2 346.7M1029.2 351.5L1033.3 346M1028.8 346.5L1023.9 341.7M1028.8 346.5L1033 341M1028.4 341.6L1023.5 336.7M1028.4 341.6L1032.6 336.1M1028.1 336.6L1023.2 331.7M1028.1 336.6L1032.3 331.1M1027.8 331.6L1023 326.7M1027.8 331.6L1032 326.1M1027.5 326.6L1022.7 321.6M1027.5 326.6L1031.8 321.2M1027.3 321.6L1022.5 316.6M1027.3 321.6L1031.5 316.2M1027 316.6L1022.2 311.6M1027 316.6L1031.3 311.2M1026.8 311.6L1022.1 306.8M1026.8 311.6L1031 306.3M1026.5 306.6L1023.2 303.1M1026.5 306.6L1029.6 302.8M1026.3 302L1026.1 298M1039.8 393.5L1033.7 390.3M1039.8 393.5L1042.2 387.1M1038.1 388.8L1032.1 385.5M1038.1 388.8L1040.6 382.4M1036.4 384.1L1030.4 380.8M1036.4 384.1L1038.9 377.7M1034.7 379.4L1028.6 376.2M1034.7 379.4L1037.1 373M1032.9 374.8L1026.8 371.6M1032.9 374.8L1035.2 368.3M1031 370.2L1024.7 367.2M1031 370.2L1033.1 363.6M1028.8 365.6L1022.4 363.1M1028.8 365.6L1030.5 358.9M1026.4 361.3L1019.8 359.2M1026.4 361.3L1027.5 354.5M1023.7 357.1L1017 355.3M1023.7 357.1L1024.6 350.2M1020.9 352.9L1014.2 351.1M1020.9 352.9L1021.8 346.1M1018.2 348.7L1011.5 346.9M1018.2 348.7L1019.2 341.9M1015.4 344.6L1008.7 343M1015.4 344.6L1016.1 337.7M1012.5 340.5L1005.8 338.7M1012.5 340.5L1013.4 333.6M1009.8 336.3L1003.3 334.1M1009.8 336.3L1011.1 329.5M1007.4 331.9L1001 329.3M1007.4 331.9L1009.1 325.2M1005.3 327.4L999 324.5M1005.3 327.4L1007.2 320.8M1003.2 322.8L997 319.8M1003.2 322.8L1005.4 316.2M1001.3 318.2L995.1 315.2M1001.3 318.2L1003.5 311.7M999.4 313.6L993.2 310.6M999.4 313.6L1001.6 307M997.4 309L991.2 306M997.4 309L999.6 302.4M995.5 304.4L989.3 301.4M995.5 304.4L997.6 297.8M993.5 299.8L987.3 296.7M993.5 299.8L995.7 293.2M991.6 295.1L985.4 292.1M991.6 295.1L993.8 288.6M989.7 290.5L984.5 288M989.7 290.5L991.6 285.1M987.8 285.9L984.3 284.2M987.8 285.9L989 282.2M987 284L985.5 280.3M1099.6 363.7L1092.7 363.8M1099.6 363.7L1098.6 356.9M1095.8 360.5L1088.9 360.6M1095.8 360.5L1094.8 353.6M1092 357.2L1085.1 357.4M1092 357.2L1090.9 350.4M1088.1 354L1081.3 354.2M1088.1 354L1087.1 347.2M1084.3 350.8L1077.4 351M1084.3 350.8L1083.2 344M1080.5 347.6L1073.6 347.8M1080.5 347.6L1079.3 340.8M1076.6 344.5L1069.7 344.8M1076.6 344.5L1075.4 337.7M1072.7 341.4L1065.8 341.7M1072.7 341.4L1071.4 334.6M1068.7 338.3L1061.8 338.7M1068.7 338.3L1067.4 331.5M1064.8 335.2L1057.9 335.7M1064.8 335.2L1063.4 328.5M1060.8 332.2L1053.9 332.7M1060.8 332.2L1059.4 325.4M1056.8 329.2L1050.5 329.6M1056.8 329.2L1055.5 323M1052.8 326.2L1048.4 326.5M1052.8 326.2L1051.9 321.8M1050 324L1046.8 321.6M1092.8 339.6L1086.4 337M1092.8 339.6L1094.5 332.9M1090.5 335.1L1084.1 332.5M1090.5 335.1L1092.3 328.4M1088.3 330.6L1081.9 328M1088.3 330.6L1090 323.9M1086 326.2L1079.6 323.5M1086 326.2L1087.8 319.5M1083.8 321.7L1077.4 319M1083.8 321.7L1085.6 315M1081.6 317.2L1075.2 314.5M1081.6 317.2L1083.4 310.5M1079.4 312.7L1073.1 310M1079.4 312.7L1081.3 306M1077.3 308.2L1071 305.4M1077.3 308.2L1079.2 301.5M1075.2 303.6L1070.6 301.6M1075.2 303.6L1076.6 298.8M1073.1 299.1L1070.2 297.9M1073.1 299.1L1073.9 296.1M1073 299L1071.3 295.4M1106.9 385.5L1101 381.9M1106.9 385.5L1109.6 379.2M1105.3 380.8L1099.4 377.3M1105.3 380.8L1108 374.4M1103.8 376L1097.8 372.5M1103.8 376L1106.5 369.7M1102.3 371.2L1096.4 367.6M1102.3 371.2L1105.1 364.9M1100.8 366.5L1095 362.8M1100.8 366.5L1103.7 360.2M1099.4 361.6L1093.7 357.8M1099.4 361.6L1102.5 355.5M1098.2 356.8L1092.5 352.9M1098.2 356.8L1101.4 350.7M1097 351.9L1091.4 347.9M1097 351.9L1100.3 345.9M1095.9 347.1L1090.4 343M1095.9 347.1L1099.2 341M1094.8 342.2L1089.3 338.1M1094.8 342.2L1098.2 336.1M1093.8 337.3L1088.2 333.2M1093.8 337.3L1097.1 331.3M1092.7 332.4L1087.1 328.3M1092.7 332.4L1096 326.4M1091.6 327.5L1086 323.5M1091.6 327.5L1094.9 321.5M1090.4 322.7L1084.8 318.7M1090.4 322.7L1093.7 316.6M1089.3 317.8L1083.6 313.9M1089.3 317.8L1092.4 311.7M1088.1 313L1082.4 309M1088.1 313L1091.2 306.8M1086.9 308.1L1081.2 304.2M1086.9 308.1L1090 302M1085.6 303.3L1080 299.3M1085.6 303.3L1088.8 297.1M1084.5 298.4L1078.8 294.4M1084.5 298.4L1087.6 292.3M1083.3 293.5L1077.7 289.5M1083.3 293.5L1086.5 287.4M1082.2 288.7L1076.6 284.6M1082.2 288.7L1085.4 282.6M1081.1 283.8L1075.5 279.7M1081.1 283.8L1084.4 277.8M1080 278.9L1074.5 274.8M1080 278.9L1083.4 272.9M1079 274L1073.5 269.9M1079 274L1082.4 268M1078 269.1L1072.5 264.9M1078 269.1L1081.4 263.1M1077 264.2L1071.5 260M1077 264.2L1080.4 258.2M1076 259.3L1071.3 255.7M1076 259.3L1078.9 254.2M1075 254.4L1071.8 252M1075 254.4L1077 250.9M1074.5 252L1073.7 248.1M1130.9 381.5L1125.1 377.7M1130.9 381.5L1133.9 375.3M1129.6 376.7L1123.8 372.9M1129.6 376.7L1132.6 370.5M1128.3 371.9L1122.5 368M1128.3 371.9L1131.3 365.7M1127 367L1121.2 363.2M1127 367L1130 360.8M1125.7 362.2L1119.9 358.4M1125.7 362.2L1128.7 356M1124.4 357.4L1118.6 353.6M1124.4 357.4L1127.4 351.2M1123 352.6L1117.3 348.7M1123 352.6L1126.1 346.4M1121.7 347.7L1116 343.9M1121.7 347.7L1124.8 341.5M1120.4 342.9L1114.7 339.1M1120.4 342.9L1123.5 336.7M1119.1 338.1L1113.4 334.3M1119.1 338.1L1122.1 331.9M1117.8 333.3L1112 329.5M1117.8 333.3L1120.8 327.1M1116.5 328.4L1110.7 324.6M1116.5 328.4L1119.5 322.2M1115.2 323.6L1109.4 319.8M1115.2 323.6L1118.2 317.4M1113.8 318.8L1108.1 315M1113.8 318.8L1116.9 312.6M1112.5 314L1106.8 310.1M1112.5 314L1115.6 307.8M1111.2 309.1L1105.5 305.3M1111.2 309.1L1114.3 302.9M1109.9 304.3L1104.2 300.5M1109.9 304.3L1113 298.1M1108.6 299.5L1102.9 295.6M1108.6 299.5L1111.7 293.3M1107.4 294.6L1101.6 290.8M1107.4 294.6L1110.4 288.5M1106.1 289.8L1100.4 286M1106.1 289.8L1109.2 283.6M1104.8 285L1099.1 281.1M1104.8 285L1107.9 278.8M1103.6 280.1L1097.8 276.3M1103.6 280.1L1106.7 274M1102.3 275.3L1096.6 271.4M1102.3 275.3L1105.4 269.1M1101.1 270.4L1095.4 266.5M1101.1 270.4L1104.2 264.3M1099.9 265.6L1094.2 261.7M1099.9 265.6L1103 259.5M1098.7 260.7L1094 257.5M1098.7 260.7L1101.3 255.6M1097.5 255.9L1094.3 253.7M1097.5 255.9L1099.2 252.5M1097 254L1096 250.1M1112.1 383.5L1108.2 377.8M1112.1 383.5L1117.3 379M1112.7 378.5L1108.8 372.8M1112.7 378.5L1117.8 373.9M1113.3 373.6L1109.4 367.9M1113.3 373.6L1118.5 369M1114 368.6L1110.2 362.9M1114 368.6L1119.2 364.1M1114.7 363.7L1111.1 357.8M1114.7 363.7L1120 359.3M1115.6 358.8L1112.1 352.8M1115.6 358.8L1121.1 354.5M1116.6 353.9L1113.3 347.8M1116.6 353.9L1122.2 349.8M1117.8 349L1114.6 342.9M1117.8 349L1123.4 345M1119 344.1L1115.8 338M1119 344.1L1124.6 340.2M1120.2 339.3L1117 333.2M1120.2 339.3L1125.9 335.4M1121.4 334.4L1118.3 328.3M1121.4 334.4L1127.1 330.6M1122.7 329.6L1119.6 323.4M1122.7 329.6L1128.4 325.7M1123.9 324.8L1120.8 318.6M1123.9 324.8L1129.6 320.9M1125.2 319.9L1122.1 313.8M1125.2 319.9L1130.9 316.1M1126.5 315.1L1123.4 308.9M1126.5 315.1L1132.2 311.3M1127.8 310.3L1124.7 304.1M1127.8 310.3L1133.5 306.4M1129.1 305.4L1126 299.2M1129.1 305.4L1134.8 301.6M1130.4 300.6L1127.4 294.4M1130.4 300.6L1136.1 296.8M1131.7 295.8L1128.8 289.6M1131.7 295.8L1137.5 292.1M1133.1 291L1130.2 284.7M1133.1 291L1138.9 287.3M1134.5 286.2L1131.6 279.9M1134.5 286.2L1140.3 282.5M1135.9 281.4L1133 275.1M1135.9 281.4L1141.7 277.7M1137.3 276.6L1134.3 270.4M1137.3 276.6L1143.1 272.8M1138.6 271.8L1135.5 265.6M1138.6 271.8L1144.3 267.9M1139.8 266.9L1136.7 260.8M1139.8 266.9L1145.5 263M1141 262.1L1138.2 256.5M1141 262.1L1146.2 258.5M1142.2 257.2L1140.2 253.4M1142.2 257.2L1145.8 254.7M1143 254L1144 250.1M1152 384.5L1147.6 379.2M1152 384.5L1156.7 379.4M1152.2 379.5L1147.8 374.2M1152.2 379.5L1156.8 374.4M1152.3 374.5L1147.9 369.2M1152.3 374.5L1157 369.4M1152.4 369.5L1148 364.2M1152.4 369.5L1157.1 364.4M1152.6 364.5L1148.2 359.2M1152.6 364.5L1157.3 359.5M1152.7 359.5L1148.3 354.2M1152.7 359.5L1157.4 354.5M1152.9 354.5L1148.5 349.2M1152.9 354.5L1157.6 349.5M1153 349.5L1148.6 344.2M1153 349.5L1157.7 344.5M1153.2 344.5L1148.8 339.2M1153.2 344.5L1157.9 339.5M1153.4 339.5L1149 334.2M1153.4 339.5L1158.1 334.5M1153.6 334.5L1149.2 329.2M1153.6 334.5L1158.3 329.5M1153.7 329.5L1149.4 324.2M1153.7 329.5L1158.5 324.5M1153.9 324.5L1149.5 319.2M1153.9 324.5L1158.6 319.5M1154 319.5L1149.5 314.3M1154 319.5L1158.6 314.4M1154.1 314.5L1149.5 309.3M1154.1 314.5L1158.6 309.4M1154.1 309.5L1149.5 304.3M1154.1 309.5L1158.6 304.3M1154.1 304.5L1149.5 299.4M1154.1 304.5L1158.6 299.3M1154 299.5L1150.6 295.6M1154 299.5L1157.4 295.6M1154 294.5L1151.8 292.1M1154 294.5L1156.2 292M1154 294L1154 290M1182.5 295.5L1177.7 290.5M1182.5 295.5L1186.8 290.1M1182.3 290.5L1177.5 285.5M1182.3 290.5L1186.6 285.1M1182.1 285.5L1177.3 280.5M1182.1 285.5L1186.4 280.1M1181.9 280.5L1177.1 275.5M1181.9 280.5L1186.2 275.1M1181.7 275.5L1176.9 270.5M1181.7 275.5L1186 270.1M1181.5 270.5L1176.7 265.5M1181.5 270.5L1185.8 265.1M1181.2 265.5L1176.5 260.5M1181.2 265.5L1185.6 260.1M1181 260.5L1176.2 255.6M1181 260.5L1185.3 255.1M1180.8 255.5L1176 250.6M1180.8 255.5L1185.1 250.1M1180.5 250.5L1175.7 245.6M1180.5 250.5L1184.8 245.1M1180.3 245.5L1175.5 240.6M1180.3 245.5L1184.6 240.1M1180 240.6L1175.2 235.6M1180 240.6L1184.3 235.1M1179.8 235.6L1176.1 231.8M1179.8 235.6L1183 231.5M1179.5 230.6L1177.2 228.2M1179.5 230.6L1181.6 228M1179.5 230L1179.3 226M1181.3 351.6L1180.9 344.7M1181.3 351.6L1188.1 350.3M1184.4 347.7L1184 340.8M1184.4 347.7L1191.1 346.3M1187.4 343.7L1187 336.8M1187.4 343.7L1194.2 342.4M1190.5 339.8L1190.1 332.9M1190.5 339.8L1197.3 338.5M1193.6 335.8L1193.2 328.9M1193.6 335.8L1200.4 334.5M1196.7 331.9L1196.3 325M1196.7 331.9L1203.4 330.6M1199.8 328L1199.4 321.1M1199.8 328L1206.5 326.7M1202.9 324L1202.5 317.1M1202.9 324L1209.6 322.8M1206 320.1L1205.7 314.5M1206 320.1L1211.4 319.1M1209.1 316.2L1208.9 312.5M1209.1 316.2L1212.7 315.5M1210 315L1212.5 311.9M1180 388.5L1175.6 383.2M1180 388.5L1184.7 383.4M1180.1 383.5L1175.7 378.2M1180.1 383.5L1184.8 378.4M1180.3 378.5L1175.8 373.2M1180.3 378.5L1184.9 373.4M1180.4 373.5L1176 368.2M1180.4 373.5L1185.1 368.4M1180.5 368.5L1176.1 363.2M1180.5 368.5L1185.2 363.4M1180.6 363.5L1176.2 358.2M1180.6 363.5L1185.3 358.4M1180.8 358.5L1176.4 353.2M1180.8 358.5L1185.5 353.4M1180.9 353.5L1176.5 348.2M1180.9 353.5L1185.6 348.5M1181 348.5L1176.7 343.2M1181 348.5L1185.8 343.5M1181.2 343.5L1176.9 338.2M1181.2 343.5L1185.9 338.5M1181.4 338.5L1177.1 333.2M1181.4 338.5L1186.2 333.5M1181.6 333.5L1177.3 328.2M1181.6 333.5L1186.4 328.5M1181.8 328.5L1177.5 323.2M1181.8 328.5L1186.6 323.5M1182 323.5L1177.7 318.2M1182 323.5L1186.7 318.5M1182.2 318.5L1177.8 313.2M1182.2 318.5L1186.9 313.5M1182.3 313.5L1177.9 308.2M1182.3 313.5L1187 308.5M1182.5 308.5L1178 303.3M1182.5 308.5L1187.1 303.4M1182.5 303.5L1178 298.3M1182.5 303.5L1187.1 298.4M1182.5 298.5L1177.8 293.4M1182.5 298.5L1186.9 293.3M1182.4 293.5L1177.7 288.5M1182.4 293.5L1186.8 288.2M1182.2 288.5L1177.4 283.6M1182.2 288.5L1186.4 283.1M1181.8 283.6L1176.9 278.8M1181.8 283.6L1185.9 278M1181.3 278.6L1176.2 274M1181.3 278.6L1185.2 272.9M1180.6 273.6L1175.3 269.2M1180.6 273.6L1184.3 267.8M1179.8 268.7L1174.3 264.5M1179.8 268.7L1183.3 262.8M1178.7 263.8L1173.1 259.8M1178.7 263.8L1182 257.7M1177.5 259L1171.8 255.1M1177.5 259L1180.6 252.8M1176.2 254.1L1170.4 250.4M1176.2 254.1L1179.1 247.9M1174.8 249.3L1168.9 245.7M1174.8 249.3L1177.7 243.1M1173.3 244.6L1167.5 240.9M1173.3 244.6L1176.2 238.3M1171.9 239.8L1166.1 236M1171.9 239.8L1174.9 233.5M1170.5 235L1164.6 231.4M1170.5 235L1173.3 228.7M1169 230.2L1163.1 226.7M1169 230.2L1171.7 223.9M1167.4 225.5L1161.5 222M1167.4 225.5L1170.1 219.1M1165.9 220.7L1159.9 217.2M1165.9 220.7L1168.6 214.4M1164.4 215.9L1158.5 212.3M1164.4 215.9L1167.2 209.6M1162.9 211.2L1158.2 208.2M1162.9 211.2L1165.2 206.1M1161.4 206.4L1158.3 204.5M1161.4 206.4L1162.9 203M1161 205L1159.8 201.2M1237.7 395.6L1230.9 394.2M1237.7 395.6L1238.2 388.7M1234.6 391.7L1227.8 390.4M1234.6 391.7L1235 384.8M1231.5 387.7L1224.8 386.4M1231.5 387.7L1232 380.8M1228.6 383.7L1221.8 382.2M1228.6 383.7L1229.2 376.8M1225.7 379.6L1219.1 377.7M1225.7 379.6L1226.8 372.8M1222.9 375.5L1216.2 373.8M1222.9 375.5L1223.7 368.6M1220.3 371.2L1214 368.4M1220.3 371.2L1222.3 364.6M1219 366.4L1214.1 361.6M1219 366.4L1223.2 360.9M1219.4 361.4L1215.9 355.5M1219.4 361.4L1224.8 357.2M1220.6 356.6L1217.7 350.3M1220.6 356.6L1226.4 352.9M1222.1 351.8L1219.4 345.4M1222.1 351.8L1228.1 348.3M1223.7 347.1L1220.9 340.7M1223.7 347.1L1229.6 343.5M1225.2 342.3L1222.5 335.9M1225.2 342.3L1231.1 338.8M1226.8 337.6L1224.4 331.4M1226.8 337.6L1232.6 334.4M1228.6 332.9L1226.9 328.5M1228.6 332.9L1232.7 330.7M1230 329L1231.3 325.2M1132.5 382.7L1128.2 388.1M1132.5 382.7L1126.6 379.1M1127.6 383.5L1123.2 388.8M1127.6 383.5L1121.7 379.8M1122.6 384.3L1118.3 389.7M1122.6 384.3L1116.8 380.7M1117.7 385.2L1113.5 390.7M1117.7 385.2L1111.8 381.7M1112.8 386.3L1108.8 391.9M1112.8 386.3L1106.7 383M1108 387.6L1104.7 393.7M1108 387.6L1101.6 385.2M1103.4 389.6L1100.8 396M1103.4 389.6L1096.8 387.8M1099 391.9L1096.3 398.2M1099 391.9L1092.3 390M1094.4 393.8L1091 399.8M1094.4 393.8L1088 391.2M1089.5 395.1L1085.3 400.5M1089.5 395.1L1083.6 391.6M1084.6 395.9L1080.1 401.1M1084.6 395.9L1078.9 392M1079.6 396.4L1074.9 401.4M1079.6 396.4L1074.1 392.4M1074.6 396.8L1069.7 401.6M1074.6 396.8L1069.2 392.5M1069.7 397L1064.6 401.7M1069.7 397L1064.3 392.6M1064.7 397.1L1059.5 401.6M1064.7 397.1L1059.5 392.5M1059.7 397L1054.3 401.3M1059.7 397L1054.7 392.2M1054.7 396.6L1049.1 400.7M1054.7 396.6L1049.9 391.6M1049.7 396L1043.9 399.7M1049.7 396L1045.3 390.7M1044.8 395.1L1038.8 398.5M1044.8 395.1L1040.7 389.6M1039.9 394L1033.8 397.2M1039.9 394L1036 388.3M1035.1 392.8L1028.9 395.8M1035.1 392.8L1031.2 387M1030.3 391.4L1024 394.3M1030.3 391.4L1026.6 385.6M1025.5 389.9L1019.1 392.6M1025.5 389.9L1022 384M1020.8 388.3L1014.3 390.9M1020.8 388.3L1017.4 382.3M1016.1 386.6L1009.6 388.9M1016.1 386.6L1012.9 380.4M1011.4 384.6L1004.9 386.7M1011.4 384.6L1008.5 378.4M1006.9 382.5L1000.2 384.1M1006.9 382.5L1004.5 376M1002.6 380.1L995.8 381.4M1002.6 380.1L1000.4 373.5M998.3 377.5L991.5 378.5M998.3 377.5L996.3 370.8M994.1 374.8L988.7 375.5M994.1 374.8L992.6 369.6M989.9 372L986.4 372.6M989.9 372L988.9 368.7M989 371.5L985.6 369.4M1133.5 382.7L1139.6 379.5M1133.5 382.7L1137.4 388.4M1138.3 383.9L1144.5 380.8M1138.3 383.9L1142.2 389.6M1143.2 385.2L1149.3 382.1M1143.2 385.2L1147.1 390.9M1148 386.4L1154.2 383.3M1148 386.4L1151.9 392.1M1152.9 387.6L1159 384.4M1152.9 387.6L1156.8 393.3M1157.7 388.8L1163.8 385.6M1157.7 388.8L1161.7 394.4M1162.6 389.9L1168.6 386.6M1162.6 389.9L1166.7 395.5M1167.5 390.9L1173.5 387.4M1167.5 390.9L1171.8 396.3M1172.4 391.8L1178.3 388.1M1172.4 391.8L1176.8 397.1M1177.4 392.5L1183.1 388.7M1177.4 392.5L1181.9 397.7M1182.3 393.2L1188 389.3M1182.3 393.2L1186.9 398.3M1187.3 393.7L1192.9 389.8M1187.3 393.7L1192 398.8M1192.3 394.3L1197.9 390.2M1192.3 394.3L1197 399.3M1197.3 394.7L1202.9 390.7M1197.3 394.7L1202 399.8M1202.2 395.2L1207.8 391.2M1202.2 395.2L1206.9 400.3M1207.2 395.7L1212.8 391.7M1207.2 395.7L1211.9 400.8M1212.2 396.2L1217.8 392.1M1212.2 396.2L1216.9 401.2M1217.2 396.6L1222.7 392.4M1217.2 396.6L1222 401.5M1222.2 396.9L1227.5 392.6M1222.2 396.9L1227.1 401.7M1227.2 397L1232.4 392.5M1227.2 397L1232.3 401.6M1232.2 396.9L1237.2 392.2M1232.2 396.9L1237.5 401.3M1237.1 396.7L1242 391.7M1237.1 396.7L1242.6 400.8M1242.1 396.2L1246.9 391.2M1242.1 396.2L1247.7 400.3M1247.1 395.8L1251.8 390.7M1247.1 395.8L1252.7 399.7M1252.1 395.2L1256.7 390.1M1252.1 395.2L1257.7 399.2M1257 394.7L1260.7 390.7M1257 394.7L1261.5 397.7M1262 394.1L1264.4 391.5M1262 394.1L1264.8 396.1M1263 394L1267 393.6" stroke="#4a962a" stroke-width="1.9" fill="none" stroke-linecap="round"/>
<path d="M972.1 399.4L966 402.7M972.1 399.4L968 393.8M967.2 398.3L961.2 401.7M967.2 398.3L963 392.8M962.3 397.3L956.3 400.8M962.3 397.3L958.1 391.8M957.4 396.4L951.5 400M957.4 396.4L953 391M952.4 395.6L946.7 399.5M952.4 395.6L947.9 390.4M947.5 395L941.8 398.9M947.5 395L942.8 389.9M942.5 394.5L937 398.4M942.5 394.5L937.9 389.5M937.5 394L933.6 396.8M937.5 394L934.2 390.4M994.5 410.8L987.7 411.7M994.5 410.8L992.8 404.1M990.4 408L983.5 408.8M990.4 408L988.7 401.3M986.2 405.2L979.4 406.1M986.2 405.2L984.5 398.5M982.1 402.4L975.3 403.3M982.1 402.4L980.3 395.7M977.9 399.7L971.1 400.8M977.9 399.7L975.9 393.1M973.6 397.1L966.8 398.4M973.6 397.1L971.5 390.6M969.4 394.4L962.5 395.1M969.4 394.4L967.8 387.7M965.4 391.4L958.5 391.6M965.4 391.4L964.3 384.6M961.6 388.1L954.7 388.2M961.6 388.1L960.7 381.3M957.9 384.9L951 384.8M957.9 384.9L957 378M954.1 381.6L947.2 381.6M954.1 381.6L953.2 374.7M950.3 378.3L943.4 378.4M950.3 378.3L949.3 371.5M946.5 375L939.6 375.2M946.5 375L945.5 368.2M942.7 371.8L935.8 372M942.7 371.8L941.6 365M938.9 368.6L932 368.7M938.9 368.6L937.8 361.8M935 365.4L929.9 365.5M935 365.4L934.3 360.3M931.2 362.2L928 362.2M931.2 362.2L930.7 359M1093.6 394.7L1092 401.5M1093.6 394.7L1086.7 394.1M1089.5 397.6L1087.9 404.4M1089.5 397.6L1082.6 396.9M1085.4 400.5L1083.7 407.2M1085.4 400.5L1078.5 399.7M1081.2 403.3L1079.2 409.9M1081.2 403.3L1074.4 402.2M1077 406L1075.3 412.7M1077 406L1070.1 405.2M1072.9 408.8L1071.1 415.5M1072.9 408.8L1066.1 407.9M1068.6 411.3L1065.9 417.7M1068.6 411.3L1061.9 409.5M1063.9 413L1060.1 418.8M1063.9 413L1057.6 410.1M1059 414L1054.4 419.2M1059 414L1053.2 410.2M1054 414.5L1049.1 419.3M1054 414.5L1048.6 410.3M1049 414.7L1043.9 419.3M1049 414.7L1043.7 410.2M1044 414.7L1038.8 419.3M1044 414.7L1038.8 410.2M1039 414.7L1033.7 419.1M1039 414.7L1033.9 410M1034 414.6L1028.7 419M1034 414.6L1028.9 409.9M1029 414.5L1023.7 418.9M1029 414.5L1023.9 409.8M1024 414.3L1018.6 418.6M1024 414.3L1019.1 409.5M1019 414L1013.5 418.2M1019 414L1014.2 409.1M1014 413.6L1008.5 417.8M1014 413.6L1009.2 408.7M1009.1 413.3L1003.5 417.4M1009.1 413.3L1004.2 408.3M1004.1 412.9L998.6 417.1M1004.1 412.9L999.2 408M999.1 412.6L993.7 416.9M999.1 412.6L994.1 407.8M994.1 412.4L988.7 416.7M994.1 412.4L989.1 407.6M989.1 412.2L983.7 416.5M989.1 412.2L984.1 407.4M984.1 412L978.8 416.4M984.1 412L979 407.3M979.1 411.9L973.8 416.2M979.1 411.9L974 407.1M974.1 411.7L968.8 416.1M974.1 411.7L969 407M969.1 411.5L963.8 415.9M969.1 411.5L964.1 406.8M964.1 411.4L958.7 415.7M964.1 411.4L959.1 406.6M959.1 411.2L953.7 415.5M959.1 411.2L954.1 406.4M954.1 411L948.7 415.3M954.1 411L949.1 406.2M949.1 410.7L943.7 415M949.1 410.7L944.2 405.9M944.1 410.4L938.7 414.7M944.1 410.4L939.2 405.6M939.1 410.2L933.7 414.4M939.1 410.2L934.2 405.3M934.1 409.9L928.7 414.1M934.1 409.9L929.2 405M929.1 409.6L923.7 413.8M929.1 409.6L924.2 404.7M924.2 409.3L918.7 413.5M924.2 409.3L919.2 404.4M919.2 409L914.3 412.8M919.2 409L914.7 404.6M914.2 408.7L910.8 411.3M914.2 408.7L911.1 405.7M1028 342.2L1025.4 335.8M1028 342.2L1034 338.7M1029.6 337.4L1027 331.1M1029.6 337.4L1035.6 334M1031.2 332.7L1028.7 326.3M1031.2 332.7L1037.3 329.3M1032.9 328L1030.4 321.6M1032.9 328L1039 324.7M1034.7 323.3L1032.3 316.8M1034.7 323.3L1040.8 320.1M1036.5 318.7L1034.4 312.1M1036.5 318.7L1042.8 315.7M1038.6 314.1L1036.5 307.5M1038.6 314.1L1044.8 311.2M1040.6 309.6L1038.7 302.9M1040.6 309.6L1046.9 306.8M1042.8 305L1040.9 298.4M1042.8 305L1049.1 302.3M1044.9 300.5L1043.3 294.9M1044.9 300.5L1050.3 298.2M1047.1 296L1046 292.2M1047.1 296L1050.7 294.4M1029.8 359L1024.8 354.2M1029.8 359L1033.9 353.5M1029.4 354L1024.4 349.2M1029.4 354L1033.5 348.5M1029 349L1024.1 344.2M1029 349L1033.1 343.5M1028.6 344.1L1023.7 339.2M1028.6 344.1L1032.8 338.5M1028.3 339.1L1023.4 334.2M1028.3 339.1L1032.5 333.6M1027.9 334.1L1023.1 329.2M1027.9 334.1L1032.2 328.6M1027.7 329.1L1022.8 324.2M1027.7 329.1L1031.9 323.7M1027.4 324.1L1022.6 319.1M1027.4 324.1L1031.7 318.7M1027.1 319.1L1022.3 314.1M1027.1 319.1L1031.4 313.7M1026.9 314.1L1022.1 309.1M1026.9 314.1L1031.2 308.7M1026.6 309.1L1022.6 304.9M1026.6 309.1L1030.3 304.6M1026.4 304.1L1023.7 301.3M1026.4 304.1L1028.8 301.1M1039 391.2L1032.9 387.9M1039 391.2L1041.5 384.8M1037.3 386.5L1031.2 383.1M1037.3 386.5L1039.8 380.1M1035.6 381.8L1029.5 378.5M1035.6 381.8L1038 375.3M1033.8 377.1L1027.7 373.9M1033.8 377.1L1036.2 370.6M1032 372.5L1025.8 369.4M1032 372.5L1034.2 365.9M1029.9 367.9L1023.6 365.2M1029.9 367.9L1031.8 361.2M1027.6 363.4L1021.1 361.2M1027.6 363.4L1029 356.7M1025 359.2L1018.4 357.3M1025 359.2L1026.1 352.3M1022.3 355L1015.6 353.2M1022.3 355L1023.2 348.2M1019.5 350.8L1012.9 348.9M1019.5 350.8L1020.5 344M1016.8 346.6L1010.1 345M1016.8 346.6L1017.6 339.8M1013.9 342.5L1007.2 340.9M1013.9 342.5L1014.7 335.7M1011.1 338.4L1004.5 336.5M1011.1 338.4L1012.2 331.6M1008.6 334.1L1002.1 331.7M1008.6 334.1L1010.1 327.4M1006.3 329.6L1000 326.9M1006.3 329.6L1008.2 323M1004.2 325.1L998 322.2M1004.2 325.1L1006.3 318.5M1002.3 320.5L996 317.5M1002.3 320.5L1004.4 314M1000.3 315.9L994.1 312.9M1000.3 315.9L1002.5 309.4M998.4 311.3L992.2 308.3M998.4 311.3L1000.6 304.7M996.4 306.7L990.2 303.7M996.4 306.7L998.6 300.1M994.5 302.1L988.3 299M994.5 302.1L996.7 295.5M992.6 297.5L986.4 294.4M992.6 297.5L994.8 290.9M990.7 292.8L984.6 289.9M990.7 292.8L992.8 286.5M988.7 288.2L984.4 286.1M988.7 288.2L990.3 283.6M1097.7 362.1L1090.8 362.2M1097.7 362.1L1096.7 355.2M1093.9 358.8L1087 359M1093.9 358.8L1092.9 352M1090.1 355.6L1083.2 355.8M1090.1 355.6L1089 348.8M1086.2 352.4L1079.3 352.6M1086.2 352.4L1085.2 345.6M1082.4 349.2L1075.5 349.4M1082.4 349.2L1081.3 342.4M1078.5 346L1071.6 346.3M1078.5 346L1077.4 339.2M1074.6 342.9L1067.7 343.2M1074.6 342.9L1073.4 336.1M1070.7 339.8L1063.8 340.2M1070.7 339.8L1069.4 333M1066.7 336.8L1059.8 337.2M1066.7 336.8L1065.4 330M1062.8 333.7L1055.9 334.2M1062.8 333.7L1061.4 327M1058.8 330.7L1051.9 331.2M1058.8 330.7L1057.4 323.9M1054.8 327.7L1049.4 328M1054.8 327.7L1053.7 322.4M1050.8 324.6L1047.3 324.9M1050.8 324.6L1050.1 321.2M1091.7 337.3L1085.3 334.7M1091.7 337.3L1093.4 330.6M1089.4 332.9L1083 330.3M1089.4 332.9L1091.1 326.2M1087.2 328.4L1080.8 325.8M1087.2 328.4L1088.9 321.7M1084.9 323.9L1078.5 321.3M1084.9 323.9L1086.7 317.2M1082.7 319.4L1076.3 316.8M1082.7 319.4L1084.5 312.8M1080.5 314.9L1074.2 312.2M1080.5 314.9L1082.4 308.3M1078.4 310.4L1072 307.7M1078.4 310.4L1080.3 303.8M1076.2 305.9L1070.7 303.5M1076.2 305.9L1077.9 300.1M1074.1 301.4L1070.4 299.7M1074.1 301.4L1075.3 297.4M1106.1 383.1L1100.2 379.6M1106.1 383.1L1108.8 376.8M1104.5 378.4L1098.6 374.9M1104.5 378.4L1107.3 372M1103 373.6L1097.1 370.1M1103 373.6L1105.8 367.3M1101.5 368.9L1095.7 365.2M1101.5 368.9L1104.4 362.6M1100.1 364.1L1094.3 360.3M1100.1 364.1L1103.1 357.8M1098.8 359.2L1093.1 355.4M1098.8 359.2L1101.9 353.1M1097.6 354.4L1092 350.4M1097.6 354.4L1100.8 348.3M1096.5 349.5L1090.9 345.5M1096.5 349.5L1099.8 343.4M1095.4 344.6L1089.8 340.5M1095.4 344.6L1098.7 338.6M1094.3 339.7L1088.8 335.6M1094.3 339.7L1097.6 333.7M1093.2 334.9L1087.7 330.8M1093.2 334.9L1096.6 328.8M1092.1 330L1086.6 325.9M1092.1 330L1095.4 323.9M1091 325.1L1085.4 321.1M1091 325.1L1094.3 319M1089.9 320.2L1084.2 316.3M1089.9 320.2L1093.1 314.1M1088.7 315.4L1083 311.4M1088.7 315.4L1091.8 309.3M1087.5 310.5L1081.8 306.6M1087.5 310.5L1090.6 304.4M1086.3 305.7L1080.6 301.8M1086.3 305.7L1089.4 299.6M1085 300.8L1079.4 296.9M1085 300.8L1088.2 294.7M1083.9 296L1078.2 292M1083.9 296L1087.1 289.9M1082.7 291.1L1077.1 287.1M1082.7 291.1L1086 285M1081.6 286.2L1076 282.2M1081.6 286.2L1084.9 280.2M1080.5 281.3L1075 277.2M1080.5 281.3L1083.9 275.3M1079.5 276.5L1074 272.3M1079.5 276.5L1082.9 270.4M1078.5 271.6L1073 267.4M1078.5 271.6L1081.9 265.6M1077.5 266.7L1072 262.5M1077.5 266.7L1080.9 260.7M1076.5 261.8L1071 257.6M1076.5 261.8L1079.9 255.8M1075.5 256.9L1071.5 253.8M1075.5 256.9L1078 252.5M1130.2 379.1L1124.5 375.3M1130.2 379.1L1133.3 372.9M1128.9 374.3L1123.2 370.5M1128.9 374.3L1132 368.1M1127.6 369.4L1121.9 365.6M1127.6 369.4L1130.7 363.3M1126.3 364.6L1120.6 360.8M1126.3 364.6L1129.3 358.4M1125 359.8L1119.3 356M1125 359.8L1128 353.6M1123.7 355L1118 351.1M1123.7 355L1126.7 348.8M1122.4 350.1L1116.6 346.3M1122.4 350.1L1125.4 343.9M1121.1 345.3L1115.3 341.5M1121.1 345.3L1124.1 339.1M1119.8 340.5L1114 336.7M1119.8 340.5L1122.8 334.3M1118.5 335.7L1112.7 331.9M1118.5 335.7L1121.5 329.5M1117.1 330.8L1111.4 327M1117.1 330.8L1120.1 324.6M1115.8 326L1110.1 322.2M1115.8 326L1118.8 319.8M1114.5 321.2L1108.7 317.4M1114.5 321.2L1117.5 315M1113.2 316.4L1107.4 312.6M1113.2 316.4L1116.2 310.2M1111.9 311.5L1106.1 307.7M1111.9 311.5L1114.9 305.4M1110.6 306.7L1104.8 302.9M1110.6 306.7L1113.6 300.5M1109.3 301.9L1103.6 298M1109.3 301.9L1112.4 295.7M1108 297.1L1102.3 293.2M1108 297.1L1111.1 290.9M1106.7 292.2L1101 288.4M1106.7 292.2L1109.8 286M1105.5 287.4L1099.7 283.5M1105.5 287.4L1108.5 281.2M1104.2 282.6L1098.5 278.7M1104.2 282.6L1107.3 276.4M1102.9 277.7L1097.2 273.8M1102.9 277.7L1106 271.6M1101.7 272.9L1096 269M1101.7 272.9L1104.8 266.7M1100.5 268L1094.8 264.1M1100.5 268L1103.6 261.9M1099.3 263.2L1093.8 259.3M1099.3 263.2L1102.3 257.2M1098.1 258.3L1094.1 255.6M1098.1 258.3L1100.3 254.1M1112.4 381L1108.5 375.3M1112.4 381L1117.5 376.4M1113 376.1L1109.1 370.4M1113 376.1L1118.1 371.5M1113.6 371.1L1109.8 365.4M1113.6 371.1L1118.8 366.6M1114.3 366.2L1110.6 360.3M1114.3 366.2L1119.6 361.7M1115.1 361.2L1111.6 355.3M1115.1 361.2L1120.6 356.9M1116.1 356.3L1112.7 350.3M1116.1 356.3L1121.6 352.2M1117.2 351.4L1113.9 345.3M1117.2 351.4L1122.8 347.4M1118.4 346.6L1115.2 340.4M1118.4 346.6L1124 342.6M1119.6 341.7L1116.4 335.6M1119.6 341.7L1125.2 337.8M1120.8 336.9L1117.7 330.7M1120.8 336.9L1126.5 333M1122 332L1118.9 325.9M1122 332L1127.7 328.1M1123.3 327.2L1120.2 321M1123.3 327.2L1129 323.3M1124.6 322.4L1121.5 316.2M1124.6 322.4L1130.3 318.5M1125.8 317.5L1122.8 311.3M1125.8 317.5L1131.6 313.7M1127.1 312.7L1124.1 306.5M1127.1 312.7L1132.9 308.8M1128.4 307.9L1125.4 301.7M1128.4 307.9L1134.2 304M1129.7 303L1126.7 296.8M1129.7 303L1135.5 299.2M1131 298.2L1128.1 292M1131 298.2L1136.8 294.4M1132.4 293.4L1129.5 287.2M1132.4 293.4L1138.2 289.7M1133.8 288.6L1130.9 282.3M1133.8 288.6L1139.6 284.9M1135.2 283.8L1132.3 277.5M1135.2 283.8L1141 280.1M1136.6 279L1133.7 272.8M1136.6 279L1142.4 275.3M1138 274.2L1134.9 268M1138 274.2L1143.7 270.4M1139.2 269.3L1136.1 263.2M1139.2 269.3L1144.9 265.5M1140.4 264.5L1137.3 258.4M1140.4 264.5L1146.1 260.6M1141.6 259.6L1139.2 254.9M1141.6 259.6L1146 256.6M1142.8 254.8L1141.2 251.8M1142.8 254.8L1145.6 252.8M1152.1 382L1147.7 376.7M1152.1 382L1156.8 376.9M1152.2 377L1147.8 371.7M1152.2 377L1156.9 371.9M1152.4 372L1148 366.7M1152.4 372L1157.1 366.9M1152.5 367L1148.1 361.7M1152.5 367L1157.2 362M1152.6 362L1148.2 356.7M1152.6 362L1157.3 357M1152.8 357L1148.4 351.7M1152.8 357L1157.5 352M1152.9 352L1148.5 346.7M1152.9 352L1157.6 347M1153.1 347L1148.7 341.7M1153.1 347L1157.8 342M1153.3 342L1148.9 336.7M1153.3 342L1158 337M1153.5 337L1149.1 331.7M1153.5 337L1158.2 332M1153.7 332L1149.3 326.7M1153.7 332L1158.4 327M1153.8 327L1149.4 321.7M1153.8 327L1158.5 322M1154 322L1149.5 316.7M1154 322L1158.6 316.9M1154 317L1149.5 311.8M1154 317L1158.6 311.9M1154.1 312L1149.5 306.8M1154.1 312L1158.6 306.9M1154.1 307L1149.5 301.9M1154.1 307L1158.6 301.8M1154 302L1150 297.4M1154 302L1158.1 297.4M1154 297L1151.2 293.9M1154 297L1156.8 293.8M1182.4 293L1177.6 288M1182.4 293L1186.7 287.6M1182.2 288L1177.4 283M1182.2 288L1186.5 282.6M1182 283L1177.2 278M1182 283L1186.3 277.6M1181.8 278L1177 273M1181.8 278L1186.1 272.6M1181.6 273L1176.8 268M1181.6 273L1185.9 267.6M1181.4 268L1176.6 263M1181.4 268L1185.7 262.6M1181.1 263L1176.4 258M1181.1 263L1185.5 257.6M1180.9 258L1176.1 253.1M1180.9 258L1185.2 252.6M1180.7 253L1175.9 248.1M1180.7 253L1185 247.6M1180.4 248L1175.6 243.1M1180.4 248L1184.7 242.6M1180.2 243.1L1175.4 238.1M1180.2 243.1L1184.5 237.6M1179.9 238.1L1175.6 233.6M1179.9 238.1L1183.7 233.2M1179.7 233.1L1176.7 230M1179.7 233.1L1182.3 229.7M1182.8 349.6L1182.4 342.7M1182.8 349.6L1189.6 348.3M1185.9 345.7L1185.5 338.8M1185.9 345.7L1192.7 344.4M1189 341.7L1188.6 334.8M1189 341.7L1195.7 340.4M1192 337.8L1191.6 330.9M1192 337.8L1198.8 336.5M1195.1 333.8L1194.7 327M1195.1 333.8L1201.9 332.6M1198.2 329.9L1197.8 323M1198.2 329.9L1205 328.7M1201.3 326L1201 319.1M1201.3 326L1208.1 324.7M1204.4 322.1L1204.1 315.6M1204.4 322.1L1210.8 320.9M1207.5 318.1L1207.3 313.5M1207.5 318.1L1212.1 317.3M1180.1 386L1175.7 380.7M1180.1 386L1184.8 380.9M1180.2 381L1175.8 375.7M1180.2 381L1184.9 375.9M1180.3 376L1175.9 370.7M1180.3 376L1185 370.9M1180.4 371L1176 365.7M1180.4 371L1185.1 365.9M1180.6 366L1176.2 360.7M1180.6 366L1185.3 360.9M1180.7 361L1176.3 355.7M1180.7 361L1185.4 355.9M1180.8 356L1176.4 350.7M1180.8 356L1185.5 350.9M1181 351L1176.6 345.7M1181 351L1185.7 346M1181.1 346L1176.8 340.7M1181.1 346L1185.8 341M1181.3 341L1177 335.7M1181.3 341L1186.1 336M1181.5 336L1177.2 330.7M1181.5 336L1186.3 331M1181.7 331L1177.4 325.7M1181.7 331L1186.5 326M1181.9 326L1177.6 320.7M1181.9 326L1186.7 321M1182.1 321L1177.7 315.7M1182.1 321L1186.8 316M1182.3 316L1177.9 310.7M1182.3 316L1187 311M1182.4 311L1178 305.7M1182.4 311L1187.1 306M1182.5 306L1178 300.8M1182.5 306L1187.1 300.9M1182.5 301L1177.9 295.9M1182.5 301L1187 295.8M1182.4 296L1177.8 291M1182.4 296L1186.9 290.8M1182.3 291L1177.5 286M1182.3 291L1186.6 285.7M1182 286L1177.1 281.2M1182 286L1186.2 280.6M1181.6 281.1L1176.5 276.4M1181.6 281.1L1185.6 275.4M1181 276.1L1175.7 271.6M1181 276.1L1184.7 270.3M1180.2 271.2L1174.8 266.8M1180.2 271.2L1183.8 265.3M1179.3 266.3L1173.7 262.1M1179.3 266.3L1182.6 260.2M1178.1 261.4L1172.5 257.5M1178.1 261.4L1181.3 255.2M1176.9 256.6L1171.1 252.8M1176.9 256.6L1179.9 250.3M1175.5 251.7L1169.7 248M1175.5 251.7L1178.4 245.5M1174.1 247L1168.2 243.3M1174.1 247L1176.9 240.7M1172.6 242.2L1166.8 238.5M1172.6 242.2L1175.5 235.9M1171.2 237.4L1165.4 233.7M1171.2 237.4L1174.1 231.1M1169.7 232.6L1163.8 229M1169.7 232.6L1172.5 226.3M1168.2 227.8L1162.3 224.3M1168.2 227.8L1170.9 221.5M1166.6 223.1L1160.7 219.6M1166.6 223.1L1169.3 216.7M1165.1 218.3L1159.2 214.7M1165.1 218.3L1167.9 212M1163.6 213.5L1158.1 210.1M1163.6 213.5L1166.3 207.6M1162.1 208.8L1158.2 206.3M1162.1 208.8L1164 204.6M1236.2 393.6L1229.4 392.4M1236.2 393.6L1236.5 386.7M1233.1 389.7L1226.3 388.4M1233.1 389.7L1233.5 382.8M1230 385.7L1223.3 384.3M1230 385.7L1230.6 378.8M1227.1 381.7L1220.4 380M1227.1 381.7L1227.9 374.8M1224.3 377.5L1217.6 375.9M1224.3 377.5L1225.1 370.7M1221.5 373.4L1214.9 371.3M1221.5 373.4L1222.7 366.6M1219.5 368.8L1213.7 365M1219.5 368.8L1222.5 362.6M1219 363.9L1214.9 358.4M1219 363.9L1223.9 359M1219.9 359L1216.8 352.8M1219.9 359L1225.6 355.1M1221.3 354.2L1218.6 347.8M1221.3 354.2L1227.2 350.6M1222.9 349.4L1220.2 343.1M1222.9 349.4L1228.9 346M1224.4 344.7L1221.6 338.4M1224.4 344.7L1230.3 341.1M1226 339.9L1223.4 333.5M1226 339.9L1232 336.5M1227.7 335.2L1225.7 330M1227.7 335.2L1232.6 332.5M1229.4 330.5L1228.1 327.1M1229.4 330.5L1232.7 328.8M1130 383.1L1125.7 388.4M1130 383.1L1124.2 379.4M1125.1 383.9L1120.7 389.2M1125.1 383.9L1119.2 380.3M1120.2 384.8L1115.9 390.2M1120.2 384.8L1114.3 381.2M1115.3 385.7L1111.1 391.2M1115.3 385.7L1109.3 382.3M1110.4 386.9L1106.7 392.7M1110.4 386.9L1104.2 383.9M1105.7 388.6L1102.8 394.8M1105.7 388.6L1099.1 386.5M1101.2 390.8L1098.6 397.2M1101.2 390.8L1094.5 389M1096.7 392.9L1093.7 399.1M1096.7 392.9L1090.1 390.8M1092 394.5L1088.1 400.3M1092 394.5L1085.8 391.5M1087.1 395.5L1082.7 400.8M1087.1 395.5L1081.2 391.8M1082.1 396.2L1077.5 401.3M1082.1 396.2L1076.5 392.2M1077.1 396.6L1072.3 401.5M1077.1 396.6L1071.6 392.5M1072.2 396.9L1067.2 401.7M1072.2 396.9L1066.8 392.6M1067.2 397.1L1062 401.7M1067.2 397.1L1061.9 392.6M1062.2 397.1L1056.9 401.5M1062.2 397.1L1057.1 392.4M1057.2 396.9L1051.7 401M1057.2 396.9L1052.3 392M1052.2 396.4L1046.5 400.2M1052.2 396.4L1047.6 391.2M1047.2 395.6L1041.3 399.1M1047.2 395.6L1043 390.2M1042.3 394.6L1036.3 397.8M1042.3 394.6L1038.3 389M1037.5 393.4L1031.3 396.5M1037.5 393.4L1033.6 387.7M1032.7 392.1L1026.4 395.1M1032.7 392.1L1028.9 386.3M1027.9 390.7L1021.6 393.5M1027.9 390.7L1024.3 384.8M1023.1 389.1L1016.7 391.8M1023.1 389.1L1019.7 383.2M1018.4 387.5L1012 389.9M1018.4 387.5L1015.1 381.4M1013.7 385.6L1007.2 387.8M1013.7 385.6L1010.7 379.4M1009.2 383.6L1002.5 385.5M1009.2 383.6L1006.4 377.3M1004.7 381.3L998 382.7M1004.7 381.3L1002.4 374.8M1000.4 378.8L993.6 380M1000.4 378.8L998.4 372.2M996.2 376.1L989.9 377.1M996.2 376.1L994.4 370M992 373.4L987.6 374M992 373.4L990.8 369.1M1135.9 383.3L1142.1 380.2M1135.9 383.3L1139.8 389M1140.8 384.6L1146.9 381.5M1140.8 384.6L1144.6 390.3M1145.6 385.8L1151.7 382.7M1145.6 385.8L1149.5 391.5M1150.4 387L1156.6 383.9M1150.4 387L1154.4 392.7M1155.3 388.2L1161.4 385M1155.3 388.2L1159.3 393.9M1160.2 389.4L1166.2 386.1M1160.2 389.4L1164.2 395M1165.1 390.4L1171 387M1165.1 390.4L1169.2 395.9M1170 391.4L1175.9 387.8M1170 391.4L1174.3 396.7M1174.9 392.2L1180.7 388.4M1174.9 392.2L1179.4 397.4M1179.9 392.9L1185.6 389M1179.9 392.9L1184.4 398M1184.8 393.5L1190.5 389.5M1184.8 393.5L1189.5 398.6M1189.8 394L1195.4 390M1189.8 394L1194.5 399.1M1194.8 394.5L1200.4 390.5M1194.8 394.5L1199.5 399.5M1199.7 395L1205.3 390.9M1199.7 395L1204.5 400M1204.7 395.5L1210.3 391.5M1204.7 395.5L1209.4 400.5M1209.7 396L1215.3 391.9M1209.7 396L1214.4 401M1214.7 396.4L1220.2 392.3M1214.7 396.4L1219.5 401.4M1219.7 396.8L1225.1 392.5M1219.7 396.8L1224.6 401.6M1224.7 397L1230 392.6M1224.7 397L1229.7 401.7M1229.7 397L1234.8 392.4M1229.7 397L1234.9 401.5M1234.7 396.8L1239.6 392M1234.7 396.8L1240.1 401.1M1239.6 396.5L1244.4 391.5M1239.6 396.5L1245.2 400.6M1244.6 396L1249.3 391M1244.6 396L1250.2 400M1249.6 395.5L1254.3 390.4M1249.6 395.5L1255.2 399.5M1254.6 394.9L1258.8 390.2M1254.6 394.9L1259.8 398.5M1259.5 394.4L1262.5 391.1M1259.5 394.4L1263.2 396.9" stroke="#8cc63f" stroke-width="1.9" fill="none" stroke-linecap="round"/>
<path d="M975 400C971.7 399.3 962 397.1 955 396C948 394.9 936.7 393.9 933 393.5M997 412.5C994.2 410.6 984.9 404.2 980 401C975.1 397.8 972.5 396.8 967.5 393C962.5 389.2 956.1 383.2 950 378C943.9 372.8 934.2 364.7 931 362M1096 393C1093.3 394.8 1085.7 400.6 1080 404C1074.3 407.4 1070.3 411.8 1062 413.5C1053.7 415.2 1040.8 414.7 1030 414.5C1019.2 414.3 1009.5 413.1 997 412.5C984.5 411.9 969.3 411.7 955 411C940.7 410.3 918.3 408.9 911 408.5M1027 345C1028.5 340.8 1032.5 328.5 1036 320C1039.5 311.5 1046 298.3 1048 294M1030 362C1029.7 357.5 1028.6 345 1028 335C1027.4 325 1026.6 307.5 1026.3 302M1040 394C1038.3 389.7 1033.5 375.3 1030 368C1026.5 360.7 1022.7 355.8 1019 350C1015.3 344.2 1011.7 340 1008 333C1004.3 326 1000.5 316.2 997 308C993.5 299.8 988.7 288 987 284M1100 364C1096 360.7 1084.3 350.7 1076 344C1067.7 337.3 1054.3 327.3 1050 324M1093 340C1091.2 336.3 1085.3 324.8 1082 318C1078.7 311.2 1074.5 302.2 1073 299M1107 386C1105.7 381.7 1101.7 370.2 1099 360C1096.3 349.8 1093.8 337 1091 325C1088.2 313 1084.8 300.2 1082 288C1079.2 275.8 1075.8 258 1074.5 252M1131 382C1129.3 375.8 1124.2 356.7 1121 345C1117.8 333.3 1115 323.2 1112 312C1109 300.8 1105.5 287.7 1103 278C1100.5 268.3 1098 258 1097 254M1112 384C1112.5 380.3 1113.7 369.3 1115 362C1116.3 354.7 1117.5 350 1120 340C1122.5 330 1127 313 1130 302C1133 291 1135.8 282 1138 274C1140.2 266 1142.2 257.3 1143 254M1152 385C1152.2 379.2 1152.7 360.8 1153 350C1153.3 339.2 1153.8 329.3 1154 320C1154.2 310.7 1154 298.3 1154 294M1182.5 296C1182.2 290 1181.5 271 1181 260C1180.5 249 1179.8 235 1179.5 230M1181 352C1183.3 349 1190.2 340.2 1195 334C1199.8 327.8 1207.5 318.2 1210 315M1180 389C1180.2 382.5 1180.6 364.8 1181 350C1181.4 335.2 1182.7 313.3 1182.5 300C1182.3 286.7 1181.8 280 1180 270C1178.2 260 1174.5 248.7 1172 240C1169.5 231.3 1166.8 223.8 1165 218C1163.2 212.2 1161.7 207.2 1161 205M1238 396C1236 393.3 1229.2 385 1226 380C1222.8 375 1219.3 371.7 1219 366C1218.7 360.3 1222.2 352.2 1224 346C1225.8 339.8 1229 331.8 1230 329M1133 382.6C1129.2 383.3 1117.2 384.9 1110 387C1102.8 389.1 1098.3 393.3 1090 395C1081.7 396.7 1069 397.3 1060 397C1051 396.7 1044.3 395.2 1036 393C1027.7 390.8 1017.8 387.6 1010 384C1002.2 380.4 992.5 373.6 989 371.5M1133 382.6C1138.8 384 1156.8 388.9 1168 391C1179.2 393.1 1189.7 394 1200 395C1210.3 396 1219.5 397.2 1230 397C1240.5 396.8 1257.5 394.5 1263 394" stroke="#2a6a20" stroke-width="1.7" fill="none" stroke-linecap="round"/>
<path d="M1026.3 300L1024.3 283" stroke="#2f6e22" stroke-width="1.5" fill="none"/>
<path d="M1024.3 283L1020.3 257" stroke="#d3cf48" stroke-width="7.6" fill="none" stroke-linecap="round"/>
<path d="M1024.3 283L1020.3 257" stroke="#eae886" stroke-width="7.6" fill="none" stroke-dasharray="1.2 1.6"/>
<path d="M1074.5 252L1073.5 242" stroke="#2f6e22" stroke-width="1.5" fill="none"/>
<path d="M1073.5 242L1078.5 212" stroke="#d3cf48" stroke-width="7.6" fill="none" stroke-linecap="round"/>
<path d="M1073.5 242L1078.5 212" stroke="#eae886" stroke-width="7.6" fill="none" stroke-dasharray="1.2 1.6"/>
<path d="M1097 254L1097.5 240" stroke="#2f6e22" stroke-width="1.5" fill="none"/>
<path d="M1097.5 240L1103.5 202" stroke="#d3cf48" stroke-width="7.6" fill="none" stroke-linecap="round"/>
<path d="M1097.5 240L1103.5 202" stroke="#eae886" stroke-width="7.6" fill="none" stroke-dasharray="1.2 1.6"/>
<g font-family="Liberation Serif, DejaVu Serif, serif" fill="#111">
<text x="745.5" y="74.5" font-size="16.4" text-anchor="middle">ВЕСЕННИЕ</text>
<text x="745.5" y="93" font-size="16.4" text-anchor="middle">ПОБЕГИ</text>
<text x="486.5" y="179.8" font-size="16.6" text-anchor="start">Ветви</text>
<text x="471.5" y="234.2" font-size="16.6" text-anchor="start">Стебель</text>
<text x="506" y="325.6" font-size="16.6" text-anchor="start">Листья</text>
<text x="511.5" y="431.6" font-size="16.9" text-anchor="start">Корневище</text>
<text x="791" y="131" font-size="16.6" text-anchor="start">Спорангий</text>
<text x="792.5" y="224.4" font-size="16.6" text-anchor="start">Стебель</text>
<text x="788" y="316" font-size="16.6" text-anchor="start">Листья</text>
<text x="1244.5" y="185.8" font-size="17" text-anchor="middle">Спороносный</text>
<text x="1239.5" y="202.6" font-size="17" text-anchor="middle">колосок</text>
<text x="913" y="255.8" font-size="17" text-anchor="start">Ветви</text>
<text x="1249.5" y="288.2" font-size="17" text-anchor="start">Листья</text>
<text x="914" y="452" font-size="17" text-anchor="start">Корень</text>
<text x="1097" y="452.4" font-size="17" text-anchor="start">Стебель</text>
</g>
<path d="M534 175.6L557.4 162.6M534 176.6L556 177.4M532.5 230.2H586M563 321H597.5M598.5 426.5H693M766 126H788M751.5 219.5H788M750.5 311.5H787M1191 190.6L1107.5 201.8M931 260L986 290.5M931 260L931.5 360M1185 285L1245.5 283.4M973 447.5H1041M1135 434L1168 393" stroke="#111" stroke-width="1.5" fill="none"/>
</svg><!--FIG-END-->
    <div class="q" style="left:32px;top:458.1px"><span id="q1">1. <b>Листья</b> хвоща</span></div>
    <div class="sel" style="left:168px;top:450.2px;width:266px;border-color:#94a742;box-shadow:0 0 2px rgba(142,166,58,.8),inset 0 0 3px rgba(120,130,200,.25)"><svg width="12" height="9" viewBox="0 0 12 9" style="position:absolute;right:2.2px;top:12.6px"><path d="M2.400 2.100 L6 5.900 L9.600 2.100" stroke="#333" stroke-width="1.900" fill="none"/></svg></div>
    <div class="q" style="left:437.5px;top:458.1px">.</div>
    <div class="q" style="left:32px;top:514.1px"><span id="q2">2. <b>Корни</b> плауна</span></div>
    <div class="sel" style="left:166px;top:506.1px;width:245.3px;border-color:#b3408f;box-shadow:0 0 2px rgba(184,58,154,.8),inset 0 0 3px rgba(120,130,200,.25)"><svg width="12" height="9" viewBox="0 0 12 9" style="position:absolute;right:2.2px;top:12.6px"><path d="M2.400 2.100 L6 5.900 L9.600 2.100" stroke="#333" stroke-width="1.900" fill="none"/></svg></div>
    <div class="q" style="left:414px;top:514.1px">.</div>
    <div class="q" style="left:32px;top:562.5px" id="q3">3. <b>Как зимует хвощ?</b></div>
    <div class="rad" style="top:599.5px"></div><div class="q rt" style="top:600px" id="r1">Стебель хвоща может пережить зиму</div>
    <div class="rad" style="top:632px"></div><div class="q rt" style="top:632.8px;letter-spacing:-0.2px" id="r2">Зимует стебель</div>
    <div class="rad" style="top:666px"></div><div class="q rt" style="top:666.8px;letter-spacing:0.13px" id="r3">Зимует только корневище, побег гибнет</div>
    <div id="drop"><div id="dhl"></div><div class="opt" style="top:23px" id="o1">прикреплены к корневищу</div><div class="opt" style="top:46px" id="o2">прикреплены к стеблю</div></div>
    <div id="btn"><span>Ответить!</span></div>
  </div>
  
  <div id="wm1">Активация Windows</div>
  <div id="wm2">Чтобы активировать Windows, перейдите в раздел<br>"Параметры".</div>
  <div id="mail"><svg width="18" height="14" viewBox="0 0 18 14"><rect x="0.5" y="0.5" width="17" height="13" fill="#fff"/><path d="M0.5 0.5 L9 8 L17.5 0.5 M0.5 13.5 L6.5 6.5 M17.5 13.5 L11.5 6.5" stroke="#2aa7e0" stroke-width="1.4" fill="none"/></svg></div>
  <div id="bell"><svg width="60" height="60" viewBox="0 0 60 60"><defs><clipPath id="bc"><circle cx="30" cy="30" r="30"/></clipPath></defs><g clip-path="url(#bc)"><path d="M22 40 L42 22 L64 44 L44 66Z" fill="#c7335f" opacity="0.75"/></g><path d="M30 12.5 a2.6 2.6 0 0 1 2.6 2.6 v0.6 c4.6 1.3 7.4 5.2 7.4 10.3 v8 l1.6 2 h-23.2 l1.6 -2 v-8 c0 -5.100 2.8 -9 7.400 -10.300 v-0.600 a2.600 2.600 0 0 1 2.600 -2.600z" fill="#fff"/><rect x="17.5" y="37.600" width="25" height="3.400" rx="1.200" fill="#fff"/><path d="M25.800 43 h8.400 a4.200 3.400 0 0 1 -8.400 0z" fill="#fff"/></svg></div>
  <div id="sbar"><div id="thumb"></div><svg class="abs" style="left:0;top:0" width="17" height="789" viewBox="0 0 17 789"><path d="M4.500 10.500 L8.500 6 L12.500 10.500Z" fill="#505050"/><path d="M4.500 778 L8.500 782.500 L12.500 778Z" fill="#505050"/></svg></div>
</div>

<!-- ======= TASKBAR ======= -->
<div id="task">
  <div class="abs" style="left:245px;top:0;width:48px;height:40px;background:#3a3a3a"></div>
  <div class="abs" style="left:151px;top:38px;width:40px;height:2px;background:#8fb8e0"></div>
  <div class="abs" style="left:245px;top:38px;width:48px;height:2px;background:#8fb8e0"></div>
  <svg class="abs" style="left:0;top:0" width="1600" height="40" viewBox="0 860 1600 40" fill="none">
    <!-- windows logo -->
    <path d="M15.5 874.3 L22.5 873.3 V879.5 H15.5Z M23.5 873.2 L32.5 872 V879.5 H23.5Z M15.5 880.5 H22.5 V886.7 L15.5 885.7Z M23.5 880.5 H32.5 V888 L23.500 886.800Z" fill="#fff"/>
    <!-- search -->
    <circle cx="75" cy="877.5" r="5.3" stroke="#fff" stroke-width="1.5"/>
    <path d="M71.200 881.400 L64.500 888" stroke="#fff" stroke-width="1.600"/>
    <!-- task view -->
    <path d="M113.500 875.500 H124.500 V884.500 H113.500Z" stroke="#fff" stroke-width="1.300"/>
    <path d="M112 872.800 H126 M112 887.200 H126" stroke="#fff" stroke-width="1.200"/>
    <path d="M127.300 872.500 V874.500 M127.300 877 V887" stroke="#fff" stroke-width="1.400"/>
    <!-- yandex browser -->
    <circle cx="170.700" cy="879.500" r="12" fill="#f4f2ef"/>
    <path d="M164 872.500 L170.700 880.500 L177.500 872.500 M170.700 880 V888.500" stroke="#d6202a" stroke-width="2.600" stroke-linecap="round"/>
    <!-- yandex -->
    <circle cx="220" cy="879.500" r="12" fill="#fc2c24"/>
    <text x="220" y="885.500" font-family="Liberation Sans, sans-serif" font-weight="bold" font-size="16" fill="#fff" text-anchor="middle">Я</text>
    <!-- chrome -->
    <circle cx="268.700" cy="879.500" r="11" fill="#db4437"/>
    <path d="M268.700 879.500 L259.200 874 A11 11 0 0 0 263.200 889 L268.700 879.500Z" fill="#0f9d58"/>
    <path d="M268.700 879.500 L263.200 889 A11 11 0 0 0 278.200 874 L268.700 874Z" fill="#ffcd40"/>
    <path d="M259.200 874 A11 11 0 0 1 278.200 874 L268.700 874Z" fill="#db4437"/>
    <path d="M259.200 874 A11 11 0 0 1 278.200 874 L268.700 875 Z" fill="#db4437"/>
    <circle cx="268.700" cy="879.500" r="5.200" fill="#f1f1f1"/>
    <circle cx="268.700" cy="879.500" r="4.100" fill="#4285f4"/>
    <!-- tray -->
    <path d="M1395.500 882.500 L1400.500 877.500 L1405.500 882.500" stroke="#fff" stroke-width="1.300"/>
    <path d="M1424 884.500 Q1422.500 881 1425.500 879.500 Q1428 878.500 1428.500 881.500 Q1428.800 884.500 1426 886.500 M1428 880 L1433 873.500 L1435.500 875.500 L1430.500 882 M1430.500 882 Q1434 880.500 1436.500 882.500" stroke="#fff" stroke-width="1.200"/>
    <!-- notification -->
    <path d="M1559.500 872.500 H1574.500 V884 H1570 L1567 887 L1564 884 H1559.500Z" stroke="#fff" stroke-width="1.200"/>
    <rect x="1595" y="860" width="1" height="40" fill="#5a5a5a"/>
  </svg>
  <div class="abs tk" style="left:1452.5px;top:12px;font-size:11px">РУС</div>
  <div class="abs tk" style="left:1487px;top:4px;width:54px;text-align:center;font-size:11px">11:44</div>
  <div class="abs tk" style="left:1483px;top:21.500px;width:62px;text-align:center;font-size:11px;letter-spacing:-0.2px">24.04.2022</div>
</div>
</body>
</html>
